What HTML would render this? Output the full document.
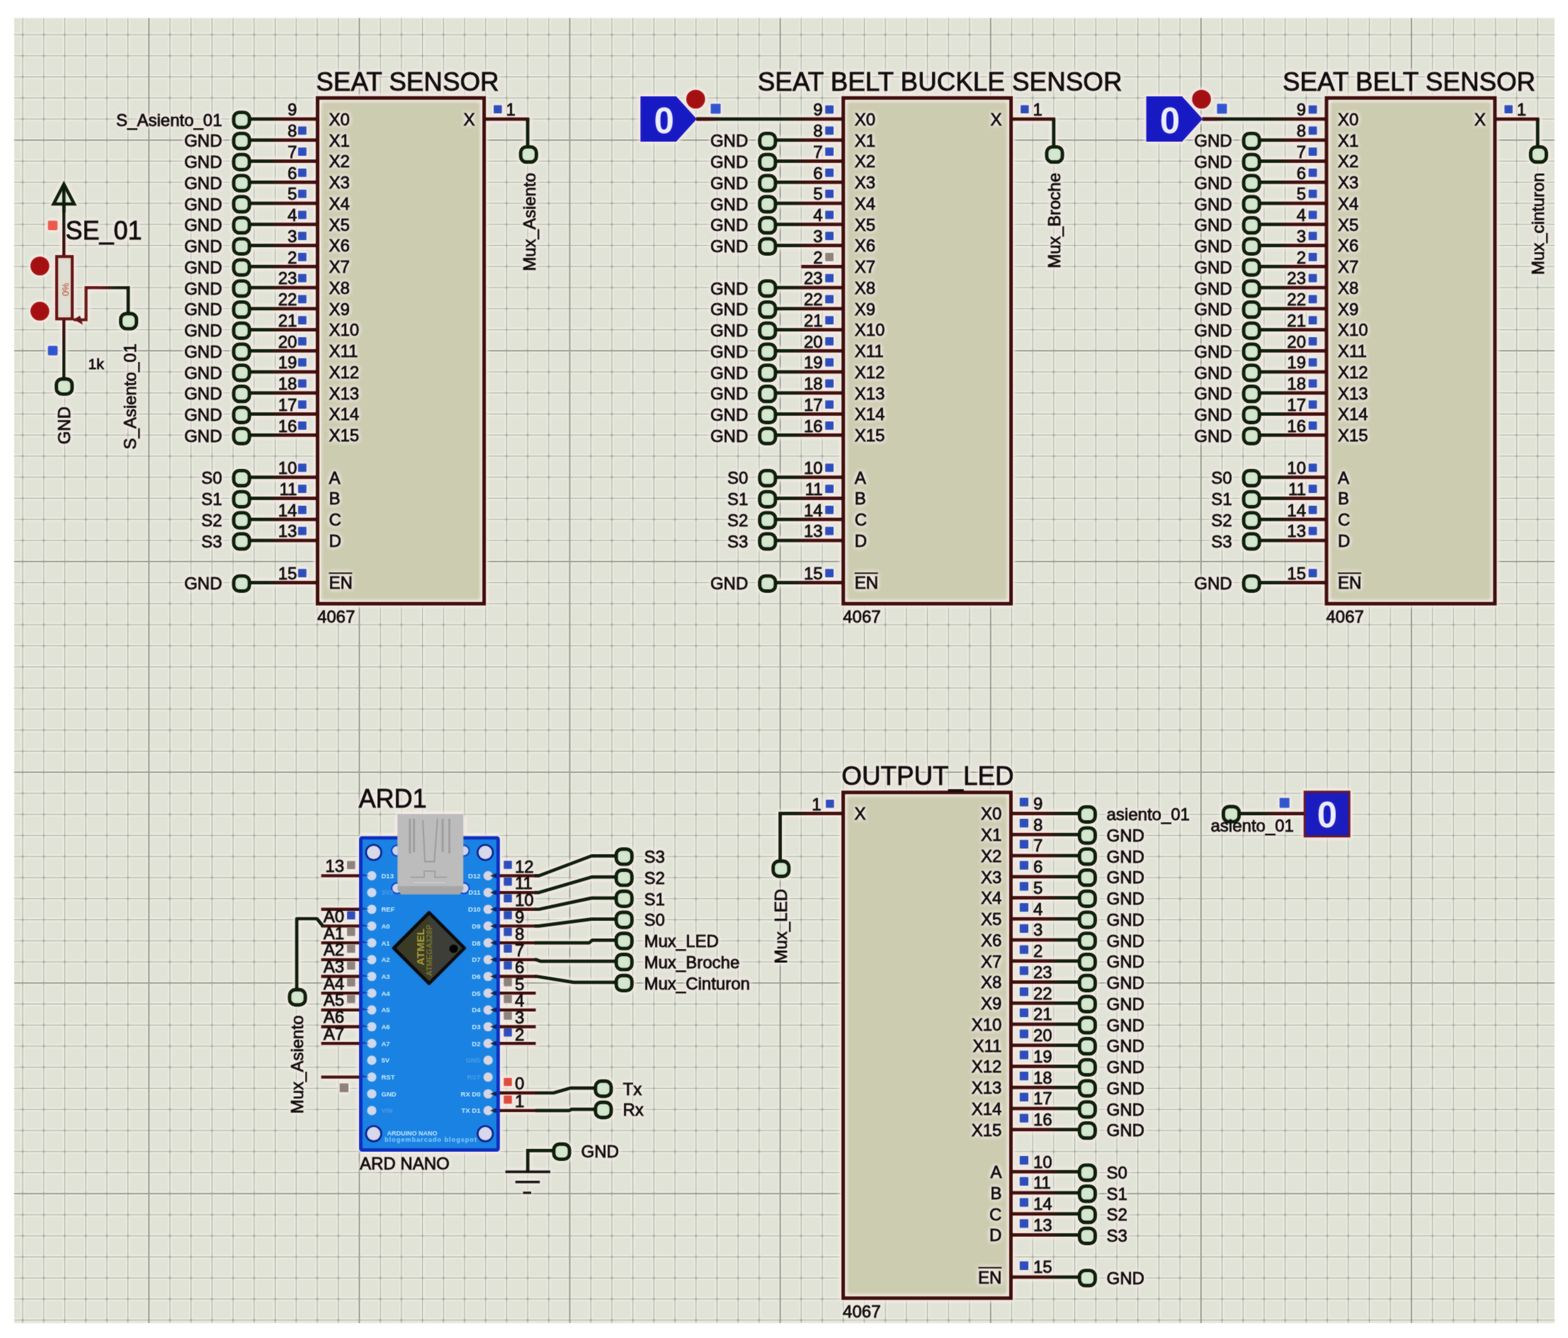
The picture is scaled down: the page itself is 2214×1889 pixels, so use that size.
<!DOCTYPE html>
<html lang="es">
<head>
<meta charset="utf-8">
<title>Schematic</title>
<style>
html,body{margin:0;padding:0;background:#fff;}
body{width:2214px;height:1889px;overflow:hidden;}
svg{display:block;font-family:"Liberation Sans",sans-serif;}
svg text{fill:#0a0a0a;stroke:#0a0a0a;stroke-width:0.85px;}
</style>
</head>
<body>
<svg width="2214" height="1889" viewBox="0 0 2214 1889">
<filter id="soft" filterUnits="userSpaceOnUse" x="0" y="0" width="2214" height="1889" color-interpolation-filters="sRGB">
<feGaussianBlur in="SourceGraphic" stdDeviation="1" result="sb"/>
<feComposite in="sb" in2="SourceGraphic" operator="arithmetic" k1="0" k2="0.42" k3="0.58" k4="0"/>
</filter>
<g filter="url(#soft)">
<rect x="0" y="0" width="2214" height="1889" fill="#ffffff"/>
<rect x="20.0" y="25.5" width="2175.0" height="1842.5" fill="#e1e3d7"/>
<path d="M32.04 25.5V1868.0M61.75 25.5V1868.0M91.46 25.5V1868.0M121.17 25.5V1868.0M150.88 25.5V1868.0M180.59 25.5V1868.0M210.3 25.5V1868.0M240.01 25.5V1868.0M269.72 25.5V1868.0M299.43 25.5V1868.0M329.14 25.5V1868.0M358.85 25.5V1868.0M388.56 25.5V1868.0M418.27 25.5V1868.0M447.98 25.5V1868.0M477.69 25.5V1868.0M507.4 25.5V1868.0M537.11 25.5V1868.0M566.82 25.5V1868.0M596.53 25.5V1868.0M626.24 25.5V1868.0M655.95 25.5V1868.0M685.66 25.5V1868.0M715.37 25.5V1868.0M745.08 25.5V1868.0M774.79 25.5V1868.0M804.5 25.5V1868.0M834.21 25.5V1868.0M863.92 25.5V1868.0M893.63 25.5V1868.0M923.34 25.5V1868.0M953.05 25.5V1868.0M982.76 25.5V1868.0M1012.47 25.5V1868.0M1042.18 25.5V1868.0M1071.89 25.5V1868.0M1101.6 25.5V1868.0M1131.31 25.5V1868.0M1161.02 25.5V1868.0M1190.73 25.5V1868.0M1220.44 25.5V1868.0M1250.15 25.5V1868.0M1279.86 25.5V1868.0M1309.57 25.5V1868.0M1339.28 25.5V1868.0M1368.99 25.5V1868.0M1398.7 25.5V1868.0M1428.41 25.5V1868.0M1458.12 25.5V1868.0M1487.83 25.5V1868.0M1517.54 25.5V1868.0M1547.25 25.5V1868.0M1576.96 25.5V1868.0M1606.67 25.5V1868.0M1636.38 25.5V1868.0M1666.09 25.5V1868.0M1695.8 25.5V1868.0M1725.51 25.5V1868.0M1755.22 25.5V1868.0M1784.93 25.5V1868.0M1814.64 25.5V1868.0M1844.35 25.5V1868.0M1874.06 25.5V1868.0M1903.77 25.5V1868.0M1933.48 25.5V1868.0M1963.19 25.5V1868.0M1992.9 25.5V1868.0M2022.61 25.5V1868.0M2052.32 25.5V1868.0M2082.03 25.5V1868.0M2111.74 25.5V1868.0M2141.45 25.5V1868.0M2171.16 25.5V1868.0M20.0 49.05H2195.0M20.0 78.8H2195.0M20.0 108.55H2195.0M20.0 138.3H2195.0M20.0 168.05H2195.0M20.0 197.8H2195.0M20.0 227.55H2195.0M20.0 257.3H2195.0M20.0 287.05H2195.0M20.0 316.8H2195.0M20.0 346.55H2195.0M20.0 376.3H2195.0M20.0 406.05H2195.0M20.0 435.8H2195.0M20.0 465.55H2195.0M20.0 495.3H2195.0M20.0 525.05H2195.0M20.0 554.8H2195.0M20.0 584.55H2195.0M20.0 614.3H2195.0M20.0 644.05H2195.0M20.0 673.8H2195.0M20.0 703.55H2195.0M20.0 733.3H2195.0M20.0 763.05H2195.0M20.0 792.8H2195.0M20.0 822.55H2195.0M20.0 852.3H2195.0M20.0 882.05H2195.0M20.0 911.8H2195.0M20.0 941.55H2195.0M20.0 971.3H2195.0M20.0 1001.05H2195.0M20.0 1030.8H2195.0M20.0 1060.55H2195.0M20.0 1090.3H2195.0M20.0 1120.05H2195.0M20.0 1149.8H2195.0M20.0 1179.55H2195.0M20.0 1209.3H2195.0M20.0 1239.05H2195.0M20.0 1268.8H2195.0M20.0 1298.55H2195.0M20.0 1328.3H2195.0M20.0 1358.05H2195.0M20.0 1387.8H2195.0M20.0 1417.55H2195.0M20.0 1447.3H2195.0M20.0 1477.05H2195.0M20.0 1506.8H2195.0M20.0 1536.55H2195.0M20.0 1566.3H2195.0M20.0 1596.05H2195.0M20.0 1625.8H2195.0M20.0 1655.55H2195.0M20.0 1685.3H2195.0M20.0 1715.05H2195.0M20.0 1744.8H2195.0M20.0 1774.55H2195.0M20.0 1804.3H2195.0M20.0 1834.05H2195.0M20.0 1863.8H2195.0" stroke="#ebece2" stroke-width="6.4" fill="none" stroke-opacity="0.7"/>
<path d="M32.04 25.5V1868.0M61.75 25.5V1868.0M91.46 25.5V1868.0M121.17 25.5V1868.0M150.88 25.5V1868.0M180.59 25.5V1868.0M240.01 25.5V1868.0M269.72 25.5V1868.0M299.43 25.5V1868.0M329.14 25.5V1868.0M358.85 25.5V1868.0M388.56 25.5V1868.0M418.27 25.5V1868.0M447.98 25.5V1868.0M477.69 25.5V1868.0M537.11 25.5V1868.0M566.82 25.5V1868.0M596.53 25.5V1868.0M626.24 25.5V1868.0M655.95 25.5V1868.0M685.66 25.5V1868.0M715.37 25.5V1868.0M745.08 25.5V1868.0M774.79 25.5V1868.0M834.21 25.5V1868.0M863.92 25.5V1868.0M893.63 25.5V1868.0M923.34 25.5V1868.0M953.05 25.5V1868.0M982.76 25.5V1868.0M1012.47 25.5V1868.0M1042.18 25.5V1868.0M1071.89 25.5V1868.0M1131.31 25.5V1868.0M1161.02 25.5V1868.0M1190.73 25.5V1868.0M1220.44 25.5V1868.0M1250.15 25.5V1868.0M1279.86 25.5V1868.0M1309.57 25.5V1868.0M1339.28 25.5V1868.0M1368.99 25.5V1868.0M1428.41 25.5V1868.0M1458.12 25.5V1868.0M1487.83 25.5V1868.0M1517.54 25.5V1868.0M1547.25 25.5V1868.0M1576.96 25.5V1868.0M1606.67 25.5V1868.0M1636.38 25.5V1868.0M1666.09 25.5V1868.0M1725.51 25.5V1868.0M1755.22 25.5V1868.0M1784.93 25.5V1868.0M1814.64 25.5V1868.0M1844.35 25.5V1868.0M1874.06 25.5V1868.0M1903.77 25.5V1868.0M1933.48 25.5V1868.0M1963.19 25.5V1868.0M2022.61 25.5V1868.0M2052.32 25.5V1868.0M2082.03 25.5V1868.0M2111.74 25.5V1868.0M2141.45 25.5V1868.0M2171.16 25.5V1868.0M20.0 49.05H2195.0M20.0 78.8H2195.0M20.0 108.55H2195.0M20.0 138.3H2195.0M20.0 168.05H2195.0M20.0 227.55H2195.0M20.0 257.3H2195.0M20.0 287.05H2195.0M20.0 316.8H2195.0M20.0 346.55H2195.0M20.0 376.3H2195.0M20.0 406.05H2195.0M20.0 435.8H2195.0M20.0 465.55H2195.0M20.0 525.05H2195.0M20.0 554.8H2195.0M20.0 584.55H2195.0M20.0 614.3H2195.0M20.0 644.05H2195.0M20.0 673.8H2195.0M20.0 703.55H2195.0M20.0 733.3H2195.0M20.0 763.05H2195.0M20.0 822.55H2195.0M20.0 852.3H2195.0M20.0 882.05H2195.0M20.0 911.8H2195.0M20.0 941.55H2195.0M20.0 971.3H2195.0M20.0 1001.05H2195.0M20.0 1030.8H2195.0M20.0 1060.55H2195.0M20.0 1120.05H2195.0M20.0 1149.8H2195.0M20.0 1179.55H2195.0M20.0 1209.3H2195.0M20.0 1239.05H2195.0M20.0 1268.8H2195.0M20.0 1298.55H2195.0M20.0 1328.3H2195.0M20.0 1358.05H2195.0M20.0 1417.55H2195.0M20.0 1447.3H2195.0M20.0 1477.05H2195.0M20.0 1506.8H2195.0M20.0 1536.55H2195.0M20.0 1566.3H2195.0M20.0 1596.05H2195.0M20.0 1625.8H2195.0M20.0 1655.55H2195.0M20.0 1715.05H2195.0M20.0 1744.8H2195.0M20.0 1774.55H2195.0M20.0 1804.3H2195.0M20.0 1834.05H2195.0M20.0 1863.8H2195.0" stroke="#a9ac9f" stroke-width="1.05" fill="none"/>
<path d="M210.3 25.5V1868.0M507.4 25.5V1868.0M804.5 25.5V1868.0M1101.6 25.5V1868.0M1398.7 25.5V1868.0M1695.8 25.5V1868.0M1992.9 25.5V1868.0M20.0 197.8H2195.0M20.0 495.3H2195.0M20.0 792.8H2195.0M20.0 1090.3H2195.0M20.0 1387.8H2195.0M20.0 1685.3H2195.0" stroke="#85887c" stroke-width="1.6" fill="none"/>
<path d="M20.0 49.05H2195.0M20.0 78.8H2195.0M20.0 108.55H2195.0M20.0 138.3H2195.0M20.0 168.05H2195.0M20.0 197.8H2195.0M20.0 227.55H2195.0M20.0 257.3H2195.0M20.0 287.05H2195.0M20.0 316.8H2195.0M20.0 346.55H2195.0M20.0 376.3H2195.0M20.0 406.05H2195.0M20.0 435.8H2195.0M20.0 465.55H2195.0M20.0 495.3H2195.0M20.0 525.05H2195.0M20.0 554.8H2195.0M20.0 584.55H2195.0M20.0 614.3H2195.0M20.0 644.05H2195.0M20.0 673.8H2195.0M20.0 703.55H2195.0M20.0 733.3H2195.0M20.0 763.05H2195.0M20.0 792.8H2195.0M20.0 822.55H2195.0M20.0 852.3H2195.0M20.0 882.05H2195.0M20.0 911.8H2195.0M20.0 941.55H2195.0M20.0 971.3H2195.0M20.0 1001.05H2195.0M20.0 1030.8H2195.0M20.0 1060.55H2195.0M20.0 1090.3H2195.0M20.0 1120.05H2195.0M20.0 1149.8H2195.0M20.0 1179.55H2195.0M20.0 1209.3H2195.0M20.0 1239.05H2195.0M20.0 1268.8H2195.0M20.0 1298.55H2195.0M20.0 1328.3H2195.0M20.0 1358.05H2195.0M20.0 1387.8H2195.0M20.0 1417.55H2195.0M20.0 1447.3H2195.0M20.0 1477.05H2195.0M20.0 1506.8H2195.0M20.0 1536.55H2195.0M20.0 1566.3H2195.0M20.0 1596.05H2195.0M20.0 1625.8H2195.0M20.0 1655.55H2195.0M20.0 1685.3H2195.0M20.0 1715.05H2195.0M20.0 1744.8H2195.0M20.0 1774.55H2195.0M20.0 1804.3H2195.0M20.0 1834.05H2195.0M20.0 1863.8H2195.0" stroke="#9c9f93" stroke-width="1.05" fill="none" stroke-dasharray="3.4 26.31" stroke-dashoffset="19.37"/>
<path d="M32.04 25.5V1868.0M61.75 25.5V1868.0M91.46 25.5V1868.0M121.17 25.5V1868.0M150.88 25.5V1868.0M180.59 25.5V1868.0M210.3 25.5V1868.0M240.01 25.5V1868.0M269.72 25.5V1868.0M299.43 25.5V1868.0M329.14 25.5V1868.0M358.85 25.5V1868.0M388.56 25.5V1868.0M418.27 25.5V1868.0M447.98 25.5V1868.0M477.69 25.5V1868.0M507.4 25.5V1868.0M537.11 25.5V1868.0M566.82 25.5V1868.0M596.53 25.5V1868.0M626.24 25.5V1868.0M655.95 25.5V1868.0M685.66 25.5V1868.0M715.37 25.5V1868.0M745.08 25.5V1868.0M774.79 25.5V1868.0M804.5 25.5V1868.0M834.21 25.5V1868.0M863.92 25.5V1868.0M893.63 25.5V1868.0M923.34 25.5V1868.0M953.05 25.5V1868.0M982.76 25.5V1868.0M1012.47 25.5V1868.0M1042.18 25.5V1868.0M1071.89 25.5V1868.0M1101.6 25.5V1868.0M1131.31 25.5V1868.0M1161.02 25.5V1868.0M1190.73 25.5V1868.0M1220.44 25.5V1868.0M1250.15 25.5V1868.0M1279.86 25.5V1868.0M1309.57 25.5V1868.0M1339.28 25.5V1868.0M1368.99 25.5V1868.0M1398.7 25.5V1868.0M1428.41 25.5V1868.0M1458.12 25.5V1868.0M1487.83 25.5V1868.0M1517.54 25.5V1868.0M1547.25 25.5V1868.0M1576.96 25.5V1868.0M1606.67 25.5V1868.0M1636.38 25.5V1868.0M1666.09 25.5V1868.0M1695.8 25.5V1868.0M1725.51 25.5V1868.0M1755.22 25.5V1868.0M1784.93 25.5V1868.0M1814.64 25.5V1868.0M1844.35 25.5V1868.0M1874.06 25.5V1868.0M1903.77 25.5V1868.0M1933.48 25.5V1868.0M1963.19 25.5V1868.0M1992.9 25.5V1868.0M2022.61 25.5V1868.0M2052.32 25.5V1868.0M2082.03 25.5V1868.0M2111.74 25.5V1868.0M2141.45 25.5V1868.0M2171.16 25.5V1868.0" stroke="#9c9f93" stroke-width="1.05" fill="none" stroke-dasharray="3.4 26.35" stroke-dashoffset="7.9"/>
<rect x="448.4" y="138.3" width="235.2" height="714" fill="#cbccb0"/>
<rect x="1190.7" y="138.3" width="236.9" height="714" fill="#cbccb0"/>
<rect x="1873" y="138.3" width="237.8" height="714" fill="#cbccb0"/>
<rect x="1190.6" y="1118.75" width="236.8" height="714" fill="#cbccb0"/>
<filter id="halo" filterUnits="userSpaceOnUse" x="0" y="0" width="2214" height="1889" color-interpolation-filters="sRGB">
<feGaussianBlur in="SourceAlpha" stdDeviation="3" result="b0"/>
<feComponentTransfer in="b0" result="b"><feFuncA type="linear" slope="3" intercept="0"/></feComponentTransfer>
<feFlood flood-color="#faeee9" flood-opacity="0.84"/>
<feComposite in2="b" operator="in" result="h"/>
<feMerge><feMergeNode in="h"/><feMergeNode in="SourceGraphic"/></feMerge>
</filter>
<g filter="url(#halo)">
<linearGradient id="g1" gradientUnits="userSpaceOnUse" x1="352.06" y1="0" x2="448.4" y2="0"><stop offset="0.26" stop-color="#0b1c09"/><stop offset="0.5" stop-color="#400c0a"/></linearGradient>
<rect x="352.06" y="165.65" width="96.34" height="4.8" fill="url(#g1)"/>
<rect x="329.96" y="158.65" width="22.2" height="21.4" fill="#d5e7cf" stroke="#0b1c09" stroke-width="4.9" rx="8"/>
<text x="313.56" y="177.65" font-size="24" text-anchor="end">S_Asiento_01</text>
<text x="419.4" y="163.25" font-size="24" text-anchor="end">9</text>
<linearGradient id="g2" gradientUnits="userSpaceOnUse" x1="352.06" y1="0" x2="448.4" y2="0"><stop offset="0.26" stop-color="#0b1c09"/><stop offset="0.5" stop-color="#400c0a"/></linearGradient>
<rect x="352.06" y="195.4" width="96.34" height="4.8" fill="url(#g2)"/>
<rect x="329.96" y="188.4" width="22.2" height="21.4" fill="#d5e7cf" stroke="#0b1c09" stroke-width="4.9" rx="8"/>
<text x="313.56" y="207.4" font-size="24" text-anchor="end">GND</text>
<text x="419.4" y="193" font-size="24" text-anchor="end">8</text>
<rect x="420.9" y="178.5" width="11.8" height="11.8" fill="#2c4dbc" rx="1"/>
<linearGradient id="g3" gradientUnits="userSpaceOnUse" x1="352.06" y1="0" x2="448.4" y2="0"><stop offset="0.26" stop-color="#0b1c09"/><stop offset="0.5" stop-color="#400c0a"/></linearGradient>
<rect x="352.06" y="225.15" width="96.34" height="4.8" fill="url(#g3)"/>
<rect x="329.96" y="218.15" width="22.2" height="21.4" fill="#d5e7cf" stroke="#0b1c09" stroke-width="4.9" rx="8"/>
<text x="313.56" y="237.15" font-size="24" text-anchor="end">GND</text>
<text x="419.4" y="222.75" font-size="24" text-anchor="end">7</text>
<rect x="420.9" y="208.25" width="11.8" height="11.8" fill="#2c4dbc" rx="1"/>
<linearGradient id="g4" gradientUnits="userSpaceOnUse" x1="352.06" y1="0" x2="448.4" y2="0"><stop offset="0.26" stop-color="#0b1c09"/><stop offset="0.5" stop-color="#400c0a"/></linearGradient>
<rect x="352.06" y="254.9" width="96.34" height="4.8" fill="url(#g4)"/>
<rect x="329.96" y="247.9" width="22.2" height="21.4" fill="#d5e7cf" stroke="#0b1c09" stroke-width="4.9" rx="8"/>
<text x="313.56" y="266.9" font-size="24" text-anchor="end">GND</text>
<text x="419.4" y="252.5" font-size="24" text-anchor="end">6</text>
<rect x="420.9" y="238" width="11.8" height="11.8" fill="#2c4dbc" rx="1"/>
<linearGradient id="g5" gradientUnits="userSpaceOnUse" x1="352.06" y1="0" x2="448.4" y2="0"><stop offset="0.26" stop-color="#0b1c09"/><stop offset="0.5" stop-color="#400c0a"/></linearGradient>
<rect x="352.06" y="284.65" width="96.34" height="4.8" fill="url(#g5)"/>
<rect x="329.96" y="277.65" width="22.2" height="21.4" fill="#d5e7cf" stroke="#0b1c09" stroke-width="4.9" rx="8"/>
<text x="313.56" y="296.65" font-size="24" text-anchor="end">GND</text>
<text x="419.4" y="282.25" font-size="24" text-anchor="end">5</text>
<rect x="420.9" y="267.75" width="11.8" height="11.8" fill="#2c4dbc" rx="1"/>
<linearGradient id="g6" gradientUnits="userSpaceOnUse" x1="352.06" y1="0" x2="448.4" y2="0"><stop offset="0.26" stop-color="#0b1c09"/><stop offset="0.5" stop-color="#400c0a"/></linearGradient>
<rect x="352.06" y="314.4" width="96.34" height="4.8" fill="url(#g6)"/>
<rect x="329.96" y="307.4" width="22.2" height="21.4" fill="#d5e7cf" stroke="#0b1c09" stroke-width="4.9" rx="8"/>
<text x="313.56" y="326.4" font-size="24" text-anchor="end">GND</text>
<text x="419.4" y="312" font-size="24" text-anchor="end">4</text>
<rect x="420.9" y="297.5" width="11.8" height="11.8" fill="#2c4dbc" rx="1"/>
<linearGradient id="g7" gradientUnits="userSpaceOnUse" x1="352.06" y1="0" x2="448.4" y2="0"><stop offset="0.26" stop-color="#0b1c09"/><stop offset="0.5" stop-color="#400c0a"/></linearGradient>
<rect x="352.06" y="344.15" width="96.34" height="4.8" fill="url(#g7)"/>
<rect x="329.96" y="337.15" width="22.2" height="21.4" fill="#d5e7cf" stroke="#0b1c09" stroke-width="4.9" rx="8"/>
<text x="313.56" y="356.15" font-size="24" text-anchor="end">GND</text>
<text x="419.4" y="341.75" font-size="24" text-anchor="end">3</text>
<rect x="420.9" y="327.25" width="11.8" height="11.8" fill="#2c4dbc" rx="1"/>
<linearGradient id="g8" gradientUnits="userSpaceOnUse" x1="352.06" y1="0" x2="448.4" y2="0"><stop offset="0.26" stop-color="#0b1c09"/><stop offset="0.5" stop-color="#400c0a"/></linearGradient>
<rect x="352.06" y="373.9" width="96.34" height="4.8" fill="url(#g8)"/>
<rect x="329.96" y="366.9" width="22.2" height="21.4" fill="#d5e7cf" stroke="#0b1c09" stroke-width="4.9" rx="8"/>
<text x="313.56" y="385.9" font-size="24" text-anchor="end">GND</text>
<text x="419.4" y="371.5" font-size="24" text-anchor="end">2</text>
<rect x="420.9" y="357" width="11.8" height="11.8" fill="#2c4dbc" rx="1"/>
<linearGradient id="g9" gradientUnits="userSpaceOnUse" x1="352.06" y1="0" x2="448.4" y2="0"><stop offset="0.26" stop-color="#0b1c09"/><stop offset="0.5" stop-color="#400c0a"/></linearGradient>
<rect x="352.06" y="403.65" width="96.34" height="4.8" fill="url(#g9)"/>
<rect x="329.96" y="396.65" width="22.2" height="21.4" fill="#d5e7cf" stroke="#0b1c09" stroke-width="4.9" rx="8"/>
<text x="313.56" y="415.65" font-size="24" text-anchor="end">GND</text>
<text x="419.4" y="401.25" font-size="24" text-anchor="end">23</text>
<rect x="420.9" y="386.75" width="11.8" height="11.8" fill="#2c4dbc" rx="1"/>
<linearGradient id="g10" gradientUnits="userSpaceOnUse" x1="352.06" y1="0" x2="448.4" y2="0"><stop offset="0.26" stop-color="#0b1c09"/><stop offset="0.5" stop-color="#400c0a"/></linearGradient>
<rect x="352.06" y="433.4" width="96.34" height="4.8" fill="url(#g10)"/>
<rect x="329.96" y="426.4" width="22.2" height="21.4" fill="#d5e7cf" stroke="#0b1c09" stroke-width="4.9" rx="8"/>
<text x="313.56" y="445.4" font-size="24" text-anchor="end">GND</text>
<text x="419.4" y="431" font-size="24" text-anchor="end">22</text>
<rect x="420.9" y="416.5" width="11.8" height="11.8" fill="#2c4dbc" rx="1"/>
<linearGradient id="g11" gradientUnits="userSpaceOnUse" x1="352.06" y1="0" x2="448.4" y2="0"><stop offset="0.26" stop-color="#0b1c09"/><stop offset="0.5" stop-color="#400c0a"/></linearGradient>
<rect x="352.06" y="463.15" width="96.34" height="4.8" fill="url(#g11)"/>
<rect x="329.96" y="456.15" width="22.2" height="21.4" fill="#d5e7cf" stroke="#0b1c09" stroke-width="4.9" rx="8"/>
<text x="313.56" y="475.15" font-size="24" text-anchor="end">GND</text>
<text x="419.4" y="460.75" font-size="24" text-anchor="end">21</text>
<rect x="420.9" y="446.25" width="11.8" height="11.8" fill="#2c4dbc" rx="1"/>
<linearGradient id="g12" gradientUnits="userSpaceOnUse" x1="352.06" y1="0" x2="448.4" y2="0"><stop offset="0.26" stop-color="#0b1c09"/><stop offset="0.5" stop-color="#400c0a"/></linearGradient>
<rect x="352.06" y="492.9" width="96.34" height="4.8" fill="url(#g12)"/>
<rect x="329.96" y="485.9" width="22.2" height="21.4" fill="#d5e7cf" stroke="#0b1c09" stroke-width="4.9" rx="8"/>
<text x="313.56" y="504.9" font-size="24" text-anchor="end">GND</text>
<text x="419.4" y="490.5" font-size="24" text-anchor="end">20</text>
<rect x="420.9" y="476" width="11.8" height="11.8" fill="#2c4dbc" rx="1"/>
<linearGradient id="g13" gradientUnits="userSpaceOnUse" x1="352.06" y1="0" x2="448.4" y2="0"><stop offset="0.26" stop-color="#0b1c09"/><stop offset="0.5" stop-color="#400c0a"/></linearGradient>
<rect x="352.06" y="522.65" width="96.34" height="4.8" fill="url(#g13)"/>
<rect x="329.96" y="515.65" width="22.2" height="21.4" fill="#d5e7cf" stroke="#0b1c09" stroke-width="4.9" rx="8"/>
<text x="313.56" y="534.65" font-size="24" text-anchor="end">GND</text>
<text x="419.4" y="520.25" font-size="24" text-anchor="end">19</text>
<rect x="420.9" y="505.75" width="11.8" height="11.8" fill="#2c4dbc" rx="1"/>
<linearGradient id="g14" gradientUnits="userSpaceOnUse" x1="352.06" y1="0" x2="448.4" y2="0"><stop offset="0.26" stop-color="#0b1c09"/><stop offset="0.5" stop-color="#400c0a"/></linearGradient>
<rect x="352.06" y="552.4" width="96.34" height="4.8" fill="url(#g14)"/>
<rect x="329.96" y="545.4" width="22.2" height="21.4" fill="#d5e7cf" stroke="#0b1c09" stroke-width="4.9" rx="8"/>
<text x="313.56" y="564.4" font-size="24" text-anchor="end">GND</text>
<text x="419.4" y="550" font-size="24" text-anchor="end">18</text>
<rect x="420.9" y="535.5" width="11.8" height="11.8" fill="#2c4dbc" rx="1"/>
<linearGradient id="g15" gradientUnits="userSpaceOnUse" x1="352.06" y1="0" x2="448.4" y2="0"><stop offset="0.26" stop-color="#0b1c09"/><stop offset="0.5" stop-color="#400c0a"/></linearGradient>
<rect x="352.06" y="582.15" width="96.34" height="4.8" fill="url(#g15)"/>
<rect x="329.96" y="575.15" width="22.2" height="21.4" fill="#d5e7cf" stroke="#0b1c09" stroke-width="4.9" rx="8"/>
<text x="313.56" y="594.15" font-size="24" text-anchor="end">GND</text>
<text x="419.4" y="579.75" font-size="24" text-anchor="end">17</text>
<rect x="420.9" y="565.25" width="11.8" height="11.8" fill="#2c4dbc" rx="1"/>
<linearGradient id="g16" gradientUnits="userSpaceOnUse" x1="352.06" y1="0" x2="448.4" y2="0"><stop offset="0.26" stop-color="#0b1c09"/><stop offset="0.5" stop-color="#400c0a"/></linearGradient>
<rect x="352.06" y="611.9" width="96.34" height="4.8" fill="url(#g16)"/>
<rect x="329.96" y="604.9" width="22.2" height="21.4" fill="#d5e7cf" stroke="#0b1c09" stroke-width="4.9" rx="8"/>
<text x="313.56" y="623.9" font-size="24" text-anchor="end">GND</text>
<text x="419.4" y="609.5" font-size="24" text-anchor="end">16</text>
<rect x="420.9" y="595" width="11.8" height="11.8" fill="#2c4dbc" rx="1"/>
<linearGradient id="g17" gradientUnits="userSpaceOnUse" x1="352.06" y1="0" x2="448.4" y2="0"><stop offset="0.26" stop-color="#0b1c09"/><stop offset="0.5" stop-color="#400c0a"/></linearGradient>
<rect x="352.06" y="671.4" width="96.34" height="4.8" fill="url(#g17)"/>
<rect x="329.96" y="664.4" width="22.2" height="21.4" fill="#d5e7cf" stroke="#0b1c09" stroke-width="4.9" rx="8"/>
<text x="313.56" y="683.4" font-size="24" text-anchor="end">S0</text>
<text x="419.4" y="669" font-size="24" text-anchor="end">10</text>
<rect x="420.9" y="654.5" width="11.8" height="11.8" fill="#2c4dbc" rx="1"/>
<linearGradient id="g18" gradientUnits="userSpaceOnUse" x1="352.06" y1="0" x2="448.4" y2="0"><stop offset="0.26" stop-color="#0b1c09"/><stop offset="0.5" stop-color="#400c0a"/></linearGradient>
<rect x="352.06" y="701.15" width="96.34" height="4.8" fill="url(#g18)"/>
<rect x="329.96" y="694.15" width="22.2" height="21.4" fill="#d5e7cf" stroke="#0b1c09" stroke-width="4.9" rx="8"/>
<text x="313.56" y="713.15" font-size="24" text-anchor="end">S1</text>
<text x="419.4" y="698.75" font-size="24" text-anchor="end">11</text>
<rect x="420.9" y="684.25" width="11.8" height="11.8" fill="#2c4dbc" rx="1"/>
<linearGradient id="g19" gradientUnits="userSpaceOnUse" x1="352.06" y1="0" x2="448.4" y2="0"><stop offset="0.26" stop-color="#0b1c09"/><stop offset="0.5" stop-color="#400c0a"/></linearGradient>
<rect x="352.06" y="730.9" width="96.34" height="4.8" fill="url(#g19)"/>
<rect x="329.96" y="723.9" width="22.2" height="21.4" fill="#d5e7cf" stroke="#0b1c09" stroke-width="4.9" rx="8"/>
<text x="313.56" y="742.9" font-size="24" text-anchor="end">S2</text>
<text x="419.4" y="728.5" font-size="24" text-anchor="end">14</text>
<rect x="420.9" y="714" width="11.8" height="11.8" fill="#2c4dbc" rx="1"/>
<linearGradient id="g20" gradientUnits="userSpaceOnUse" x1="352.06" y1="0" x2="448.4" y2="0"><stop offset="0.26" stop-color="#0b1c09"/><stop offset="0.5" stop-color="#400c0a"/></linearGradient>
<rect x="352.06" y="760.65" width="96.34" height="4.8" fill="url(#g20)"/>
<rect x="329.96" y="753.65" width="22.2" height="21.4" fill="#d5e7cf" stroke="#0b1c09" stroke-width="4.9" rx="8"/>
<text x="313.56" y="772.65" font-size="24" text-anchor="end">S3</text>
<text x="419.4" y="758.25" font-size="24" text-anchor="end">13</text>
<rect x="420.9" y="743.75" width="11.8" height="11.8" fill="#2c4dbc" rx="1"/>
<linearGradient id="g21" gradientUnits="userSpaceOnUse" x1="352.06" y1="0" x2="448.4" y2="0"><stop offset="0.26" stop-color="#0b1c09"/><stop offset="0.5" stop-color="#400c0a"/></linearGradient>
<rect x="352.06" y="820.15" width="96.34" height="4.8" fill="url(#g21)"/>
<rect x="329.96" y="813.15" width="22.2" height="21.4" fill="#d5e7cf" stroke="#0b1c09" stroke-width="4.9" rx="8"/>
<text x="313.56" y="832.15" font-size="24" text-anchor="end">GND</text>
<text x="419.4" y="817.75" font-size="24" text-anchor="end">15</text>
<rect x="420.9" y="803.25" width="11.8" height="11.8" fill="#2c4dbc" rx="1"/>
<line x1="683.6" y1="168.05" x2="747.38" y2="168.05" stroke="#400c0a" stroke-width="4.8" stroke-linecap="butt"/>
<line x1="745.08" y1="168.05" x2="745.08" y2="208.05" stroke="#0b1c09" stroke-width="4.8" stroke-linecap="butt"/>
<rect x="735.18" y="207.35" width="22.2" height="21.4" fill="#d5e7cf" stroke="#0b1c09" stroke-width="4.9" rx="8"/>
<rect x="697.1" y="148.55" width="11.5" height="11.5" fill="#2c4dbc" rx="1"/>
<text x="714.6" y="163.05" font-size="24">1</text>
<rect x="448.4" y="138.3" width="235.2" height="714" fill="none" stroke="#3c0c0a" stroke-width="5"/>
<text x="464.4" y="176.85" font-size="24">X0</text>
<text x="464.4" y="206.6" font-size="24">X1</text>
<text x="464.4" y="236.35" font-size="24">X2</text>
<text x="464.4" y="266.1" font-size="24">X3</text>
<text x="464.4" y="295.85" font-size="24">X4</text>
<text x="464.4" y="325.6" font-size="24">X5</text>
<text x="464.4" y="355.35" font-size="24">X6</text>
<text x="464.4" y="385.1" font-size="24">X7</text>
<text x="464.4" y="414.85" font-size="24">X8</text>
<text x="464.4" y="444.6" font-size="24">X9</text>
<text x="464.4" y="474.35" font-size="24">X10</text>
<text x="464.4" y="504.1" font-size="24">X11</text>
<text x="464.4" y="533.85" font-size="24">X12</text>
<text x="464.4" y="563.6" font-size="24">X13</text>
<text x="464.4" y="593.35" font-size="24">X14</text>
<text x="464.4" y="623.1" font-size="24">X15</text>
<text x="464.4" y="682.6" font-size="24">A</text>
<text x="464.4" y="712.35" font-size="24">B</text>
<text x="464.4" y="742.1" font-size="24">C</text>
<text x="464.4" y="771.85" font-size="24">D</text>
<text x="464.4" y="831.35" font-size="24">EN</text>
<line x1="464.4" y1="809.35" x2="497.4" y2="809.35" stroke="#0a0a0a" stroke-width="2" stroke-linecap="butt"/>
<text x="670.6" y="176.85" font-size="24" text-anchor="end">X</text>
<text x="447.9" y="879.3" font-size="24">4067</text>
<text x="446.3" y="128" font-size="36.8">SEAT SENSOR</text>
<linearGradient id="g22" gradientUnits="userSpaceOnUse" x1="983" y1="0" x2="1190.7" y2="0"><stop offset="0.59" stop-color="#0b1c09"/><stop offset="0.83" stop-color="#400c0a"/></linearGradient>
<rect x="983" y="165.65" width="207.7" height="4.8" fill="url(#g22)"/>
<text x="1161.7" y="163.25" font-size="24" text-anchor="end">9</text>
<rect x="1165.2" y="148.75" width="11.8" height="11.8" fill="#2c4dbc" rx="1"/>
<linearGradient id="g23" gradientUnits="userSpaceOnUse" x1="1094.81" y1="0" x2="1190.7" y2="0"><stop offset="0.26" stop-color="#0b1c09"/><stop offset="0.5" stop-color="#400c0a"/></linearGradient>
<rect x="1094.81" y="195.4" width="95.89" height="4.8" fill="url(#g23)"/>
<rect x="1072.71" y="188.4" width="22.2" height="21.4" fill="#d5e7cf" stroke="#0b1c09" stroke-width="4.9" rx="8"/>
<text x="1056.31" y="207.4" font-size="24" text-anchor="end">GND</text>
<text x="1161.7" y="193" font-size="24" text-anchor="end">8</text>
<rect x="1165.2" y="178.5" width="11.8" height="11.8" fill="#2c4dbc" rx="1"/>
<linearGradient id="g24" gradientUnits="userSpaceOnUse" x1="1094.81" y1="0" x2="1190.7" y2="0"><stop offset="0.26" stop-color="#0b1c09"/><stop offset="0.5" stop-color="#400c0a"/></linearGradient>
<rect x="1094.81" y="225.15" width="95.89" height="4.8" fill="url(#g24)"/>
<rect x="1072.71" y="218.15" width="22.2" height="21.4" fill="#d5e7cf" stroke="#0b1c09" stroke-width="4.9" rx="8"/>
<text x="1056.31" y="237.15" font-size="24" text-anchor="end">GND</text>
<text x="1161.7" y="222.75" font-size="24" text-anchor="end">7</text>
<rect x="1165.2" y="208.25" width="11.8" height="11.8" fill="#2c4dbc" rx="1"/>
<linearGradient id="g25" gradientUnits="userSpaceOnUse" x1="1094.81" y1="0" x2="1190.7" y2="0"><stop offset="0.26" stop-color="#0b1c09"/><stop offset="0.5" stop-color="#400c0a"/></linearGradient>
<rect x="1094.81" y="254.9" width="95.89" height="4.8" fill="url(#g25)"/>
<rect x="1072.71" y="247.9" width="22.2" height="21.4" fill="#d5e7cf" stroke="#0b1c09" stroke-width="4.9" rx="8"/>
<text x="1056.31" y="266.9" font-size="24" text-anchor="end">GND</text>
<text x="1161.7" y="252.5" font-size="24" text-anchor="end">6</text>
<rect x="1165.2" y="238" width="11.8" height="11.8" fill="#2c4dbc" rx="1"/>
<linearGradient id="g26" gradientUnits="userSpaceOnUse" x1="1094.81" y1="0" x2="1190.7" y2="0"><stop offset="0.26" stop-color="#0b1c09"/><stop offset="0.5" stop-color="#400c0a"/></linearGradient>
<rect x="1094.81" y="284.65" width="95.89" height="4.8" fill="url(#g26)"/>
<rect x="1072.71" y="277.65" width="22.2" height="21.4" fill="#d5e7cf" stroke="#0b1c09" stroke-width="4.9" rx="8"/>
<text x="1056.31" y="296.65" font-size="24" text-anchor="end">GND</text>
<text x="1161.7" y="282.25" font-size="24" text-anchor="end">5</text>
<rect x="1165.2" y="267.75" width="11.8" height="11.8" fill="#2c4dbc" rx="1"/>
<linearGradient id="g27" gradientUnits="userSpaceOnUse" x1="1094.81" y1="0" x2="1190.7" y2="0"><stop offset="0.26" stop-color="#0b1c09"/><stop offset="0.5" stop-color="#400c0a"/></linearGradient>
<rect x="1094.81" y="314.4" width="95.89" height="4.8" fill="url(#g27)"/>
<rect x="1072.71" y="307.4" width="22.2" height="21.4" fill="#d5e7cf" stroke="#0b1c09" stroke-width="4.9" rx="8"/>
<text x="1056.31" y="326.4" font-size="24" text-anchor="end">GND</text>
<text x="1161.7" y="312" font-size="24" text-anchor="end">4</text>
<rect x="1165.2" y="297.5" width="11.8" height="11.8" fill="#2c4dbc" rx="1"/>
<linearGradient id="g28" gradientUnits="userSpaceOnUse" x1="1094.81" y1="0" x2="1190.7" y2="0"><stop offset="0.26" stop-color="#0b1c09"/><stop offset="0.5" stop-color="#400c0a"/></linearGradient>
<rect x="1094.81" y="344.15" width="95.89" height="4.8" fill="url(#g28)"/>
<rect x="1072.71" y="337.15" width="22.2" height="21.4" fill="#d5e7cf" stroke="#0b1c09" stroke-width="4.9" rx="8"/>
<text x="1056.31" y="356.15" font-size="24" text-anchor="end">GND</text>
<text x="1161.7" y="341.75" font-size="24" text-anchor="end">3</text>
<rect x="1165.2" y="327.25" width="11.8" height="11.8" fill="#2c4dbc" rx="1"/>
<line x1="1131.31" y1="376.3" x2="1190.7" y2="376.3" stroke="#400c0a" stroke-width="4.8" stroke-linecap="butt"/>
<text x="1161.7" y="371.5" font-size="24" text-anchor="end">2</text>
<rect x="1165.2" y="357" width="11.8" height="11.8" fill="#8d837c" rx="1"/>
<linearGradient id="g29" gradientUnits="userSpaceOnUse" x1="1094.81" y1="0" x2="1190.7" y2="0"><stop offset="0.26" stop-color="#0b1c09"/><stop offset="0.5" stop-color="#400c0a"/></linearGradient>
<rect x="1094.81" y="403.65" width="95.89" height="4.8" fill="url(#g29)"/>
<rect x="1072.71" y="396.65" width="22.2" height="21.4" fill="#d5e7cf" stroke="#0b1c09" stroke-width="4.9" rx="8"/>
<text x="1056.31" y="415.65" font-size="24" text-anchor="end">GND</text>
<text x="1161.7" y="401.25" font-size="24" text-anchor="end">23</text>
<rect x="1165.2" y="386.75" width="11.8" height="11.8" fill="#2c4dbc" rx="1"/>
<linearGradient id="g30" gradientUnits="userSpaceOnUse" x1="1094.81" y1="0" x2="1190.7" y2="0"><stop offset="0.26" stop-color="#0b1c09"/><stop offset="0.5" stop-color="#400c0a"/></linearGradient>
<rect x="1094.81" y="433.4" width="95.89" height="4.8" fill="url(#g30)"/>
<rect x="1072.71" y="426.4" width="22.2" height="21.4" fill="#d5e7cf" stroke="#0b1c09" stroke-width="4.9" rx="8"/>
<text x="1056.31" y="445.4" font-size="24" text-anchor="end">GND</text>
<text x="1161.7" y="431" font-size="24" text-anchor="end">22</text>
<rect x="1165.2" y="416.5" width="11.8" height="11.8" fill="#2c4dbc" rx="1"/>
<linearGradient id="g31" gradientUnits="userSpaceOnUse" x1="1094.81" y1="0" x2="1190.7" y2="0"><stop offset="0.26" stop-color="#0b1c09"/><stop offset="0.5" stop-color="#400c0a"/></linearGradient>
<rect x="1094.81" y="463.15" width="95.89" height="4.8" fill="url(#g31)"/>
<rect x="1072.71" y="456.15" width="22.2" height="21.4" fill="#d5e7cf" stroke="#0b1c09" stroke-width="4.9" rx="8"/>
<text x="1056.31" y="475.15" font-size="24" text-anchor="end">GND</text>
<text x="1161.7" y="460.75" font-size="24" text-anchor="end">21</text>
<rect x="1165.2" y="446.25" width="11.8" height="11.8" fill="#2c4dbc" rx="1"/>
<linearGradient id="g32" gradientUnits="userSpaceOnUse" x1="1094.81" y1="0" x2="1190.7" y2="0"><stop offset="0.26" stop-color="#0b1c09"/><stop offset="0.5" stop-color="#400c0a"/></linearGradient>
<rect x="1094.81" y="492.9" width="95.89" height="4.8" fill="url(#g32)"/>
<rect x="1072.71" y="485.9" width="22.2" height="21.4" fill="#d5e7cf" stroke="#0b1c09" stroke-width="4.9" rx="8"/>
<text x="1056.31" y="504.9" font-size="24" text-anchor="end">GND</text>
<text x="1161.7" y="490.5" font-size="24" text-anchor="end">20</text>
<rect x="1165.2" y="476" width="11.8" height="11.8" fill="#2c4dbc" rx="1"/>
<linearGradient id="g33" gradientUnits="userSpaceOnUse" x1="1094.81" y1="0" x2="1190.7" y2="0"><stop offset="0.26" stop-color="#0b1c09"/><stop offset="0.5" stop-color="#400c0a"/></linearGradient>
<rect x="1094.81" y="522.65" width="95.89" height="4.8" fill="url(#g33)"/>
<rect x="1072.71" y="515.65" width="22.2" height="21.4" fill="#d5e7cf" stroke="#0b1c09" stroke-width="4.9" rx="8"/>
<text x="1056.31" y="534.65" font-size="24" text-anchor="end">GND</text>
<text x="1161.7" y="520.25" font-size="24" text-anchor="end">19</text>
<rect x="1165.2" y="505.75" width="11.8" height="11.8" fill="#2c4dbc" rx="1"/>
<linearGradient id="g34" gradientUnits="userSpaceOnUse" x1="1094.81" y1="0" x2="1190.7" y2="0"><stop offset="0.26" stop-color="#0b1c09"/><stop offset="0.5" stop-color="#400c0a"/></linearGradient>
<rect x="1094.81" y="552.4" width="95.89" height="4.8" fill="url(#g34)"/>
<rect x="1072.71" y="545.4" width="22.2" height="21.4" fill="#d5e7cf" stroke="#0b1c09" stroke-width="4.9" rx="8"/>
<text x="1056.31" y="564.4" font-size="24" text-anchor="end">GND</text>
<text x="1161.7" y="550" font-size="24" text-anchor="end">18</text>
<rect x="1165.2" y="535.5" width="11.8" height="11.8" fill="#2c4dbc" rx="1"/>
<linearGradient id="g35" gradientUnits="userSpaceOnUse" x1="1094.81" y1="0" x2="1190.7" y2="0"><stop offset="0.26" stop-color="#0b1c09"/><stop offset="0.5" stop-color="#400c0a"/></linearGradient>
<rect x="1094.81" y="582.15" width="95.89" height="4.8" fill="url(#g35)"/>
<rect x="1072.71" y="575.15" width="22.2" height="21.4" fill="#d5e7cf" stroke="#0b1c09" stroke-width="4.9" rx="8"/>
<text x="1056.31" y="594.15" font-size="24" text-anchor="end">GND</text>
<text x="1161.7" y="579.75" font-size="24" text-anchor="end">17</text>
<rect x="1165.2" y="565.25" width="11.8" height="11.8" fill="#2c4dbc" rx="1"/>
<linearGradient id="g36" gradientUnits="userSpaceOnUse" x1="1094.81" y1="0" x2="1190.7" y2="0"><stop offset="0.26" stop-color="#0b1c09"/><stop offset="0.5" stop-color="#400c0a"/></linearGradient>
<rect x="1094.81" y="611.9" width="95.89" height="4.8" fill="url(#g36)"/>
<rect x="1072.71" y="604.9" width="22.2" height="21.4" fill="#d5e7cf" stroke="#0b1c09" stroke-width="4.9" rx="8"/>
<text x="1056.31" y="623.9" font-size="24" text-anchor="end">GND</text>
<text x="1161.7" y="609.5" font-size="24" text-anchor="end">16</text>
<rect x="1165.2" y="595" width="11.8" height="11.8" fill="#2c4dbc" rx="1"/>
<linearGradient id="g37" gradientUnits="userSpaceOnUse" x1="1094.81" y1="0" x2="1190.7" y2="0"><stop offset="0.26" stop-color="#0b1c09"/><stop offset="0.5" stop-color="#400c0a"/></linearGradient>
<rect x="1094.81" y="671.4" width="95.89" height="4.8" fill="url(#g37)"/>
<rect x="1072.71" y="664.4" width="22.2" height="21.4" fill="#d5e7cf" stroke="#0b1c09" stroke-width="4.9" rx="8"/>
<text x="1056.31" y="683.4" font-size="24" text-anchor="end">S0</text>
<text x="1161.7" y="669" font-size="24" text-anchor="end">10</text>
<rect x="1165.2" y="654.5" width="11.8" height="11.8" fill="#2c4dbc" rx="1"/>
<linearGradient id="g38" gradientUnits="userSpaceOnUse" x1="1094.81" y1="0" x2="1190.7" y2="0"><stop offset="0.26" stop-color="#0b1c09"/><stop offset="0.5" stop-color="#400c0a"/></linearGradient>
<rect x="1094.81" y="701.15" width="95.89" height="4.8" fill="url(#g38)"/>
<rect x="1072.71" y="694.15" width="22.2" height="21.4" fill="#d5e7cf" stroke="#0b1c09" stroke-width="4.9" rx="8"/>
<text x="1056.31" y="713.15" font-size="24" text-anchor="end">S1</text>
<text x="1161.7" y="698.75" font-size="24" text-anchor="end">11</text>
<rect x="1165.2" y="684.25" width="11.8" height="11.8" fill="#2c4dbc" rx="1"/>
<linearGradient id="g39" gradientUnits="userSpaceOnUse" x1="1094.81" y1="0" x2="1190.7" y2="0"><stop offset="0.26" stop-color="#0b1c09"/><stop offset="0.5" stop-color="#400c0a"/></linearGradient>
<rect x="1094.81" y="730.9" width="95.89" height="4.8" fill="url(#g39)"/>
<rect x="1072.71" y="723.9" width="22.2" height="21.4" fill="#d5e7cf" stroke="#0b1c09" stroke-width="4.9" rx="8"/>
<text x="1056.31" y="742.9" font-size="24" text-anchor="end">S2</text>
<text x="1161.7" y="728.5" font-size="24" text-anchor="end">14</text>
<rect x="1165.2" y="714" width="11.8" height="11.8" fill="#2c4dbc" rx="1"/>
<linearGradient id="g40" gradientUnits="userSpaceOnUse" x1="1094.81" y1="0" x2="1190.7" y2="0"><stop offset="0.26" stop-color="#0b1c09"/><stop offset="0.5" stop-color="#400c0a"/></linearGradient>
<rect x="1094.81" y="760.65" width="95.89" height="4.8" fill="url(#g40)"/>
<rect x="1072.71" y="753.65" width="22.2" height="21.4" fill="#d5e7cf" stroke="#0b1c09" stroke-width="4.9" rx="8"/>
<text x="1056.31" y="772.65" font-size="24" text-anchor="end">S3</text>
<text x="1161.7" y="758.25" font-size="24" text-anchor="end">13</text>
<rect x="1165.2" y="743.75" width="11.8" height="11.8" fill="#2c4dbc" rx="1"/>
<linearGradient id="g41" gradientUnits="userSpaceOnUse" x1="1094.81" y1="0" x2="1190.7" y2="0"><stop offset="0.26" stop-color="#0b1c09"/><stop offset="0.5" stop-color="#400c0a"/></linearGradient>
<rect x="1094.81" y="820.15" width="95.89" height="4.8" fill="url(#g41)"/>
<rect x="1072.71" y="813.15" width="22.2" height="21.4" fill="#d5e7cf" stroke="#0b1c09" stroke-width="4.9" rx="8"/>
<text x="1056.31" y="832.15" font-size="24" text-anchor="end">GND</text>
<text x="1161.7" y="817.75" font-size="24" text-anchor="end">15</text>
<rect x="1165.2" y="803.25" width="11.8" height="11.8" fill="#2c4dbc" rx="1"/>
<line x1="1427.6" y1="168.05" x2="1490.13" y2="168.05" stroke="#400c0a" stroke-width="4.8" stroke-linecap="butt"/>
<line x1="1487.83" y1="168.05" x2="1487.83" y2="208.05" stroke="#0b1c09" stroke-width="4.8" stroke-linecap="butt"/>
<rect x="1477.93" y="207.35" width="22.2" height="21.4" fill="#d5e7cf" stroke="#0b1c09" stroke-width="4.9" rx="8"/>
<rect x="1441.1" y="148.55" width="11.5" height="11.5" fill="#2c4dbc" rx="1"/>
<text x="1458.6" y="163.05" font-size="24">1</text>
<rect x="1190.7" y="138.3" width="236.9" height="714" fill="none" stroke="#3c0c0a" stroke-width="5"/>
<text x="1206.7" y="176.85" font-size="24">X0</text>
<text x="1206.7" y="206.6" font-size="24">X1</text>
<text x="1206.7" y="236.35" font-size="24">X2</text>
<text x="1206.7" y="266.1" font-size="24">X3</text>
<text x="1206.7" y="295.85" font-size="24">X4</text>
<text x="1206.7" y="325.6" font-size="24">X5</text>
<text x="1206.7" y="355.35" font-size="24">X6</text>
<text x="1206.7" y="385.1" font-size="24">X7</text>
<text x="1206.7" y="414.85" font-size="24">X8</text>
<text x="1206.7" y="444.6" font-size="24">X9</text>
<text x="1206.7" y="474.35" font-size="24">X10</text>
<text x="1206.7" y="504.1" font-size="24">X11</text>
<text x="1206.7" y="533.85" font-size="24">X12</text>
<text x="1206.7" y="563.6" font-size="24">X13</text>
<text x="1206.7" y="593.35" font-size="24">X14</text>
<text x="1206.7" y="623.1" font-size="24">X15</text>
<text x="1206.7" y="682.6" font-size="24">A</text>
<text x="1206.7" y="712.35" font-size="24">B</text>
<text x="1206.7" y="742.1" font-size="24">C</text>
<text x="1206.7" y="771.85" font-size="24">D</text>
<text x="1206.7" y="831.35" font-size="24">EN</text>
<line x1="1206.7" y1="809.35" x2="1239.7" y2="809.35" stroke="#0a0a0a" stroke-width="2" stroke-linecap="butt"/>
<text x="1414.6" y="176.85" font-size="24" text-anchor="end">X</text>
<text x="1190.2" y="879.3" font-size="24">4067</text>
<text x="1069.8" y="128" font-size="36.8">SEAT BELT BUCKLE SENSOR</text>
<linearGradient id="g42" gradientUnits="userSpaceOnUse" x1="1698" y1="0" x2="1873" y2="0"><stop offset="0.55" stop-color="#0b1c09"/><stop offset="0.79" stop-color="#400c0a"/></linearGradient>
<rect x="1698" y="165.65" width="175" height="4.8" fill="url(#g42)"/>
<text x="1844" y="163.25" font-size="24" text-anchor="end">9</text>
<rect x="1847.7" y="148.75" width="11.8" height="11.8" fill="#2c4dbc" rx="1"/>
<linearGradient id="g43" gradientUnits="userSpaceOnUse" x1="1778.14" y1="0" x2="1873" y2="0"><stop offset="0.26" stop-color="#0b1c09"/><stop offset="0.5" stop-color="#400c0a"/></linearGradient>
<rect x="1778.14" y="195.4" width="94.86" height="4.8" fill="url(#g43)"/>
<rect x="1756.04" y="188.4" width="22.2" height="21.4" fill="#d5e7cf" stroke="#0b1c09" stroke-width="4.9" rx="8"/>
<text x="1739.64" y="207.4" font-size="24" text-anchor="end">GND</text>
<text x="1844" y="193" font-size="24" text-anchor="end">8</text>
<rect x="1847.7" y="178.5" width="11.8" height="11.8" fill="#2c4dbc" rx="1"/>
<linearGradient id="g44" gradientUnits="userSpaceOnUse" x1="1778.14" y1="0" x2="1873" y2="0"><stop offset="0.26" stop-color="#0b1c09"/><stop offset="0.5" stop-color="#400c0a"/></linearGradient>
<rect x="1778.14" y="225.15" width="94.86" height="4.8" fill="url(#g44)"/>
<rect x="1756.04" y="218.15" width="22.2" height="21.4" fill="#d5e7cf" stroke="#0b1c09" stroke-width="4.9" rx="8"/>
<text x="1739.64" y="237.15" font-size="24" text-anchor="end">GND</text>
<text x="1844" y="222.75" font-size="24" text-anchor="end">7</text>
<rect x="1847.7" y="208.25" width="11.8" height="11.8" fill="#2c4dbc" rx="1"/>
<linearGradient id="g45" gradientUnits="userSpaceOnUse" x1="1778.14" y1="0" x2="1873" y2="0"><stop offset="0.26" stop-color="#0b1c09"/><stop offset="0.5" stop-color="#400c0a"/></linearGradient>
<rect x="1778.14" y="254.9" width="94.86" height="4.8" fill="url(#g45)"/>
<rect x="1756.04" y="247.9" width="22.2" height="21.4" fill="#d5e7cf" stroke="#0b1c09" stroke-width="4.9" rx="8"/>
<text x="1739.64" y="266.9" font-size="24" text-anchor="end">GND</text>
<text x="1844" y="252.5" font-size="24" text-anchor="end">6</text>
<rect x="1847.7" y="238" width="11.8" height="11.8" fill="#2c4dbc" rx="1"/>
<linearGradient id="g46" gradientUnits="userSpaceOnUse" x1="1778.14" y1="0" x2="1873" y2="0"><stop offset="0.26" stop-color="#0b1c09"/><stop offset="0.5" stop-color="#400c0a"/></linearGradient>
<rect x="1778.14" y="284.65" width="94.86" height="4.8" fill="url(#g46)"/>
<rect x="1756.04" y="277.65" width="22.2" height="21.4" fill="#d5e7cf" stroke="#0b1c09" stroke-width="4.9" rx="8"/>
<text x="1739.64" y="296.65" font-size="24" text-anchor="end">GND</text>
<text x="1844" y="282.25" font-size="24" text-anchor="end">5</text>
<rect x="1847.7" y="267.75" width="11.8" height="11.8" fill="#2c4dbc" rx="1"/>
<linearGradient id="g47" gradientUnits="userSpaceOnUse" x1="1778.14" y1="0" x2="1873" y2="0"><stop offset="0.26" stop-color="#0b1c09"/><stop offset="0.5" stop-color="#400c0a"/></linearGradient>
<rect x="1778.14" y="314.4" width="94.86" height="4.8" fill="url(#g47)"/>
<rect x="1756.04" y="307.4" width="22.2" height="21.4" fill="#d5e7cf" stroke="#0b1c09" stroke-width="4.9" rx="8"/>
<text x="1739.64" y="326.4" font-size="24" text-anchor="end">GND</text>
<text x="1844" y="312" font-size="24" text-anchor="end">4</text>
<rect x="1847.7" y="297.5" width="11.8" height="11.8" fill="#2c4dbc" rx="1"/>
<linearGradient id="g48" gradientUnits="userSpaceOnUse" x1="1778.14" y1="0" x2="1873" y2="0"><stop offset="0.26" stop-color="#0b1c09"/><stop offset="0.5" stop-color="#400c0a"/></linearGradient>
<rect x="1778.14" y="344.15" width="94.86" height="4.8" fill="url(#g48)"/>
<rect x="1756.04" y="337.15" width="22.2" height="21.4" fill="#d5e7cf" stroke="#0b1c09" stroke-width="4.9" rx="8"/>
<text x="1739.64" y="356.15" font-size="24" text-anchor="end">GND</text>
<text x="1844" y="341.75" font-size="24" text-anchor="end">3</text>
<rect x="1847.7" y="327.25" width="11.8" height="11.8" fill="#2c4dbc" rx="1"/>
<linearGradient id="g49" gradientUnits="userSpaceOnUse" x1="1778.14" y1="0" x2="1873" y2="0"><stop offset="0.26" stop-color="#0b1c09"/><stop offset="0.5" stop-color="#400c0a"/></linearGradient>
<rect x="1778.14" y="373.9" width="94.86" height="4.8" fill="url(#g49)"/>
<rect x="1756.04" y="366.9" width="22.2" height="21.4" fill="#d5e7cf" stroke="#0b1c09" stroke-width="4.9" rx="8"/>
<text x="1739.64" y="385.9" font-size="24" text-anchor="end">GND</text>
<text x="1844" y="371.5" font-size="24" text-anchor="end">2</text>
<rect x="1847.7" y="357" width="11.8" height="11.8" fill="#2c4dbc" rx="1"/>
<linearGradient id="g50" gradientUnits="userSpaceOnUse" x1="1778.14" y1="0" x2="1873" y2="0"><stop offset="0.26" stop-color="#0b1c09"/><stop offset="0.5" stop-color="#400c0a"/></linearGradient>
<rect x="1778.14" y="403.65" width="94.86" height="4.8" fill="url(#g50)"/>
<rect x="1756.04" y="396.65" width="22.2" height="21.4" fill="#d5e7cf" stroke="#0b1c09" stroke-width="4.9" rx="8"/>
<text x="1739.64" y="415.65" font-size="24" text-anchor="end">GND</text>
<text x="1844" y="401.25" font-size="24" text-anchor="end">23</text>
<rect x="1847.7" y="386.75" width="11.8" height="11.8" fill="#2c4dbc" rx="1"/>
<linearGradient id="g51" gradientUnits="userSpaceOnUse" x1="1778.14" y1="0" x2="1873" y2="0"><stop offset="0.26" stop-color="#0b1c09"/><stop offset="0.5" stop-color="#400c0a"/></linearGradient>
<rect x="1778.14" y="433.4" width="94.86" height="4.8" fill="url(#g51)"/>
<rect x="1756.04" y="426.4" width="22.2" height="21.4" fill="#d5e7cf" stroke="#0b1c09" stroke-width="4.9" rx="8"/>
<text x="1739.64" y="445.4" font-size="24" text-anchor="end">GND</text>
<text x="1844" y="431" font-size="24" text-anchor="end">22</text>
<rect x="1847.7" y="416.5" width="11.8" height="11.8" fill="#2c4dbc" rx="1"/>
<linearGradient id="g52" gradientUnits="userSpaceOnUse" x1="1778.14" y1="0" x2="1873" y2="0"><stop offset="0.26" stop-color="#0b1c09"/><stop offset="0.5" stop-color="#400c0a"/></linearGradient>
<rect x="1778.14" y="463.15" width="94.86" height="4.8" fill="url(#g52)"/>
<rect x="1756.04" y="456.15" width="22.2" height="21.4" fill="#d5e7cf" stroke="#0b1c09" stroke-width="4.9" rx="8"/>
<text x="1739.64" y="475.15" font-size="24" text-anchor="end">GND</text>
<text x="1844" y="460.75" font-size="24" text-anchor="end">21</text>
<rect x="1847.7" y="446.25" width="11.8" height="11.8" fill="#2c4dbc" rx="1"/>
<linearGradient id="g53" gradientUnits="userSpaceOnUse" x1="1778.14" y1="0" x2="1873" y2="0"><stop offset="0.26" stop-color="#0b1c09"/><stop offset="0.5" stop-color="#400c0a"/></linearGradient>
<rect x="1778.14" y="492.9" width="94.86" height="4.8" fill="url(#g53)"/>
<rect x="1756.04" y="485.9" width="22.2" height="21.4" fill="#d5e7cf" stroke="#0b1c09" stroke-width="4.9" rx="8"/>
<text x="1739.64" y="504.9" font-size="24" text-anchor="end">GND</text>
<text x="1844" y="490.5" font-size="24" text-anchor="end">20</text>
<rect x="1847.7" y="476" width="11.8" height="11.8" fill="#2c4dbc" rx="1"/>
<linearGradient id="g54" gradientUnits="userSpaceOnUse" x1="1778.14" y1="0" x2="1873" y2="0"><stop offset="0.26" stop-color="#0b1c09"/><stop offset="0.5" stop-color="#400c0a"/></linearGradient>
<rect x="1778.14" y="522.65" width="94.86" height="4.8" fill="url(#g54)"/>
<rect x="1756.04" y="515.65" width="22.2" height="21.4" fill="#d5e7cf" stroke="#0b1c09" stroke-width="4.9" rx="8"/>
<text x="1739.64" y="534.65" font-size="24" text-anchor="end">GND</text>
<text x="1844" y="520.25" font-size="24" text-anchor="end">19</text>
<rect x="1847.7" y="505.75" width="11.8" height="11.8" fill="#2c4dbc" rx="1"/>
<linearGradient id="g55" gradientUnits="userSpaceOnUse" x1="1778.14" y1="0" x2="1873" y2="0"><stop offset="0.26" stop-color="#0b1c09"/><stop offset="0.5" stop-color="#400c0a"/></linearGradient>
<rect x="1778.14" y="552.4" width="94.86" height="4.8" fill="url(#g55)"/>
<rect x="1756.04" y="545.4" width="22.2" height="21.4" fill="#d5e7cf" stroke="#0b1c09" stroke-width="4.9" rx="8"/>
<text x="1739.64" y="564.4" font-size="24" text-anchor="end">GND</text>
<text x="1844" y="550" font-size="24" text-anchor="end">18</text>
<rect x="1847.7" y="535.5" width="11.8" height="11.8" fill="#2c4dbc" rx="1"/>
<linearGradient id="g56" gradientUnits="userSpaceOnUse" x1="1778.14" y1="0" x2="1873" y2="0"><stop offset="0.26" stop-color="#0b1c09"/><stop offset="0.5" stop-color="#400c0a"/></linearGradient>
<rect x="1778.14" y="582.15" width="94.86" height="4.8" fill="url(#g56)"/>
<rect x="1756.04" y="575.15" width="22.2" height="21.4" fill="#d5e7cf" stroke="#0b1c09" stroke-width="4.9" rx="8"/>
<text x="1739.64" y="594.15" font-size="24" text-anchor="end">GND</text>
<text x="1844" y="579.75" font-size="24" text-anchor="end">17</text>
<rect x="1847.7" y="565.25" width="11.8" height="11.8" fill="#2c4dbc" rx="1"/>
<linearGradient id="g57" gradientUnits="userSpaceOnUse" x1="1778.14" y1="0" x2="1873" y2="0"><stop offset="0.26" stop-color="#0b1c09"/><stop offset="0.5" stop-color="#400c0a"/></linearGradient>
<rect x="1778.14" y="611.9" width="94.86" height="4.8" fill="url(#g57)"/>
<rect x="1756.04" y="604.9" width="22.2" height="21.4" fill="#d5e7cf" stroke="#0b1c09" stroke-width="4.9" rx="8"/>
<text x="1739.64" y="623.9" font-size="24" text-anchor="end">GND</text>
<text x="1844" y="609.5" font-size="24" text-anchor="end">16</text>
<rect x="1847.7" y="595" width="11.8" height="11.8" fill="#2c4dbc" rx="1"/>
<linearGradient id="g58" gradientUnits="userSpaceOnUse" x1="1778.14" y1="0" x2="1873" y2="0"><stop offset="0.26" stop-color="#0b1c09"/><stop offset="0.5" stop-color="#400c0a"/></linearGradient>
<rect x="1778.14" y="671.4" width="94.86" height="4.8" fill="url(#g58)"/>
<rect x="1756.04" y="664.4" width="22.2" height="21.4" fill="#d5e7cf" stroke="#0b1c09" stroke-width="4.9" rx="8"/>
<text x="1739.64" y="683.4" font-size="24" text-anchor="end">S0</text>
<text x="1844" y="669" font-size="24" text-anchor="end">10</text>
<rect x="1847.7" y="654.5" width="11.8" height="11.8" fill="#2c4dbc" rx="1"/>
<linearGradient id="g59" gradientUnits="userSpaceOnUse" x1="1778.14" y1="0" x2="1873" y2="0"><stop offset="0.26" stop-color="#0b1c09"/><stop offset="0.5" stop-color="#400c0a"/></linearGradient>
<rect x="1778.14" y="701.15" width="94.86" height="4.8" fill="url(#g59)"/>
<rect x="1756.04" y="694.15" width="22.2" height="21.4" fill="#d5e7cf" stroke="#0b1c09" stroke-width="4.9" rx="8"/>
<text x="1739.64" y="713.15" font-size="24" text-anchor="end">S1</text>
<text x="1844" y="698.75" font-size="24" text-anchor="end">11</text>
<rect x="1847.7" y="684.25" width="11.8" height="11.8" fill="#2c4dbc" rx="1"/>
<linearGradient id="g60" gradientUnits="userSpaceOnUse" x1="1778.14" y1="0" x2="1873" y2="0"><stop offset="0.26" stop-color="#0b1c09"/><stop offset="0.5" stop-color="#400c0a"/></linearGradient>
<rect x="1778.14" y="730.9" width="94.86" height="4.8" fill="url(#g60)"/>
<rect x="1756.04" y="723.9" width="22.2" height="21.4" fill="#d5e7cf" stroke="#0b1c09" stroke-width="4.9" rx="8"/>
<text x="1739.64" y="742.9" font-size="24" text-anchor="end">S2</text>
<text x="1844" y="728.5" font-size="24" text-anchor="end">14</text>
<rect x="1847.7" y="714" width="11.8" height="11.8" fill="#2c4dbc" rx="1"/>
<linearGradient id="g61" gradientUnits="userSpaceOnUse" x1="1778.14" y1="0" x2="1873" y2="0"><stop offset="0.26" stop-color="#0b1c09"/><stop offset="0.5" stop-color="#400c0a"/></linearGradient>
<rect x="1778.14" y="760.65" width="94.86" height="4.8" fill="url(#g61)"/>
<rect x="1756.04" y="753.65" width="22.2" height="21.4" fill="#d5e7cf" stroke="#0b1c09" stroke-width="4.9" rx="8"/>
<text x="1739.64" y="772.65" font-size="24" text-anchor="end">S3</text>
<text x="1844" y="758.25" font-size="24" text-anchor="end">13</text>
<rect x="1847.7" y="743.75" width="11.8" height="11.8" fill="#2c4dbc" rx="1"/>
<linearGradient id="g62" gradientUnits="userSpaceOnUse" x1="1778.14" y1="0" x2="1873" y2="0"><stop offset="0.26" stop-color="#0b1c09"/><stop offset="0.5" stop-color="#400c0a"/></linearGradient>
<rect x="1778.14" y="820.15" width="94.86" height="4.8" fill="url(#g62)"/>
<rect x="1756.04" y="813.15" width="22.2" height="21.4" fill="#d5e7cf" stroke="#0b1c09" stroke-width="4.9" rx="8"/>
<text x="1739.64" y="832.15" font-size="24" text-anchor="end">GND</text>
<text x="1844" y="817.75" font-size="24" text-anchor="end">15</text>
<rect x="1847.7" y="803.25" width="11.8" height="11.8" fill="#2c4dbc" rx="1"/>
<line x1="2110.8" y1="168.05" x2="2173.46" y2="168.05" stroke="#400c0a" stroke-width="4.8" stroke-linecap="butt"/>
<line x1="2171.16" y1="168.05" x2="2171.16" y2="208.05" stroke="#0b1c09" stroke-width="4.8" stroke-linecap="butt"/>
<rect x="2161.26" y="207.35" width="22.2" height="21.4" fill="#d5e7cf" stroke="#0b1c09" stroke-width="4.9" rx="8"/>
<rect x="2124.3" y="148.55" width="11.5" height="11.5" fill="#2c4dbc" rx="1"/>
<text x="2141.8" y="163.05" font-size="24">1</text>
<rect x="1873" y="138.3" width="237.8" height="714" fill="none" stroke="#3c0c0a" stroke-width="5"/>
<text x="1889" y="176.85" font-size="24">X0</text>
<text x="1889" y="206.6" font-size="24">X1</text>
<text x="1889" y="236.35" font-size="24">X2</text>
<text x="1889" y="266.1" font-size="24">X3</text>
<text x="1889" y="295.85" font-size="24">X4</text>
<text x="1889" y="325.6" font-size="24">X5</text>
<text x="1889" y="355.35" font-size="24">X6</text>
<text x="1889" y="385.1" font-size="24">X7</text>
<text x="1889" y="414.85" font-size="24">X8</text>
<text x="1889" y="444.6" font-size="24">X9</text>
<text x="1889" y="474.35" font-size="24">X10</text>
<text x="1889" y="504.1" font-size="24">X11</text>
<text x="1889" y="533.85" font-size="24">X12</text>
<text x="1889" y="563.6" font-size="24">X13</text>
<text x="1889" y="593.35" font-size="24">X14</text>
<text x="1889" y="623.1" font-size="24">X15</text>
<text x="1889" y="682.6" font-size="24">A</text>
<text x="1889" y="712.35" font-size="24">B</text>
<text x="1889" y="742.1" font-size="24">C</text>
<text x="1889" y="771.85" font-size="24">D</text>
<text x="1889" y="831.35" font-size="24">EN</text>
<line x1="1889" y1="809.35" x2="1922" y2="809.35" stroke="#0a0a0a" stroke-width="2" stroke-linecap="butt"/>
<text x="2097.8" y="176.85" font-size="24" text-anchor="end">X</text>
<text x="1872.5" y="879.3" font-size="24">4067</text>
<text x="1811" y="128" font-size="36.8">SEAT BELT SENSOR</text>
<linearGradient id="g63" gradientUnits="userSpaceOnUse" x1="1427.4" y1="0" x2="1524.33" y2="0"><stop offset="0.5" stop-color="#400c0a"/><stop offset="0.74" stop-color="#0b1c09"/></linearGradient>
<rect x="1427.4" y="1146.1" width="96.93" height="4.8" fill="url(#g63)"/>
<rect x="1524.23" y="1139.1" width="22.2" height="21.4" fill="#d5e7cf" stroke="#0b1c09" stroke-width="4.9" rx="8"/>
<text x="1562.53" y="1158.1" font-size="24">asiento_01</text>
<text x="1458.9" y="1142.9" font-size="24">9</text>
<rect x="1439.8" y="1126.2" width="12.2" height="12.2" fill="#2c4dbc" rx="1"/>
<linearGradient id="g64" gradientUnits="userSpaceOnUse" x1="1427.4" y1="0" x2="1524.33" y2="0"><stop offset="0.5" stop-color="#400c0a"/><stop offset="0.74" stop-color="#0b1c09"/></linearGradient>
<rect x="1427.4" y="1175.85" width="96.93" height="4.8" fill="url(#g64)"/>
<rect x="1524.23" y="1168.85" width="22.2" height="21.4" fill="#d5e7cf" stroke="#0b1c09" stroke-width="4.9" rx="8"/>
<text x="1562.53" y="1187.85" font-size="24">GND</text>
<text x="1458.9" y="1172.65" font-size="24">8</text>
<rect x="1439.8" y="1155.95" width="12.2" height="12.2" fill="#2c4dbc" rx="1"/>
<linearGradient id="g65" gradientUnits="userSpaceOnUse" x1="1427.4" y1="0" x2="1524.33" y2="0"><stop offset="0.5" stop-color="#400c0a"/><stop offset="0.74" stop-color="#0b1c09"/></linearGradient>
<rect x="1427.4" y="1205.6" width="96.93" height="4.8" fill="url(#g65)"/>
<rect x="1524.23" y="1198.6" width="22.2" height="21.4" fill="#d5e7cf" stroke="#0b1c09" stroke-width="4.9" rx="8"/>
<text x="1562.53" y="1217.6" font-size="24">GND</text>
<text x="1458.9" y="1202.4" font-size="24">7</text>
<rect x="1439.8" y="1185.7" width="12.2" height="12.2" fill="#2c4dbc" rx="1"/>
<linearGradient id="g66" gradientUnits="userSpaceOnUse" x1="1427.4" y1="0" x2="1524.33" y2="0"><stop offset="0.5" stop-color="#400c0a"/><stop offset="0.74" stop-color="#0b1c09"/></linearGradient>
<rect x="1427.4" y="1235.35" width="96.93" height="4.8" fill="url(#g66)"/>
<rect x="1524.23" y="1228.35" width="22.2" height="21.4" fill="#d5e7cf" stroke="#0b1c09" stroke-width="4.9" rx="8"/>
<text x="1562.53" y="1247.35" font-size="24">GND</text>
<text x="1458.9" y="1232.15" font-size="24">6</text>
<rect x="1439.8" y="1215.45" width="12.2" height="12.2" fill="#2c4dbc" rx="1"/>
<linearGradient id="g67" gradientUnits="userSpaceOnUse" x1="1427.4" y1="0" x2="1524.33" y2="0"><stop offset="0.5" stop-color="#400c0a"/><stop offset="0.74" stop-color="#0b1c09"/></linearGradient>
<rect x="1427.4" y="1265.1" width="96.93" height="4.8" fill="url(#g67)"/>
<rect x="1524.23" y="1258.1" width="22.2" height="21.4" fill="#d5e7cf" stroke="#0b1c09" stroke-width="4.9" rx="8"/>
<text x="1562.53" y="1277.1" font-size="24">GND</text>
<text x="1458.9" y="1261.9" font-size="24">5</text>
<rect x="1439.8" y="1245.2" width="12.2" height="12.2" fill="#2c4dbc" rx="1"/>
<linearGradient id="g68" gradientUnits="userSpaceOnUse" x1="1427.4" y1="0" x2="1524.33" y2="0"><stop offset="0.5" stop-color="#400c0a"/><stop offset="0.74" stop-color="#0b1c09"/></linearGradient>
<rect x="1427.4" y="1294.85" width="96.93" height="4.8" fill="url(#g68)"/>
<rect x="1524.23" y="1287.85" width="22.2" height="21.4" fill="#d5e7cf" stroke="#0b1c09" stroke-width="4.9" rx="8"/>
<text x="1562.53" y="1306.85" font-size="24">GND</text>
<text x="1458.9" y="1291.65" font-size="24">4</text>
<rect x="1439.8" y="1274.95" width="12.2" height="12.2" fill="#2c4dbc" rx="1"/>
<linearGradient id="g69" gradientUnits="userSpaceOnUse" x1="1427.4" y1="0" x2="1524.33" y2="0"><stop offset="0.5" stop-color="#400c0a"/><stop offset="0.74" stop-color="#0b1c09"/></linearGradient>
<rect x="1427.4" y="1324.6" width="96.93" height="4.8" fill="url(#g69)"/>
<rect x="1524.23" y="1317.6" width="22.2" height="21.4" fill="#d5e7cf" stroke="#0b1c09" stroke-width="4.9" rx="8"/>
<text x="1562.53" y="1336.6" font-size="24">GND</text>
<text x="1458.9" y="1321.4" font-size="24">3</text>
<rect x="1439.8" y="1304.7" width="12.2" height="12.2" fill="#2c4dbc" rx="1"/>
<linearGradient id="g70" gradientUnits="userSpaceOnUse" x1="1427.4" y1="0" x2="1524.33" y2="0"><stop offset="0.5" stop-color="#400c0a"/><stop offset="0.74" stop-color="#0b1c09"/></linearGradient>
<rect x="1427.4" y="1354.35" width="96.93" height="4.8" fill="url(#g70)"/>
<rect x="1524.23" y="1347.35" width="22.2" height="21.4" fill="#d5e7cf" stroke="#0b1c09" stroke-width="4.9" rx="8"/>
<text x="1562.53" y="1366.35" font-size="24">GND</text>
<text x="1458.9" y="1351.15" font-size="24">2</text>
<rect x="1439.8" y="1334.45" width="12.2" height="12.2" fill="#2c4dbc" rx="1"/>
<linearGradient id="g71" gradientUnits="userSpaceOnUse" x1="1427.4" y1="0" x2="1524.33" y2="0"><stop offset="0.5" stop-color="#400c0a"/><stop offset="0.74" stop-color="#0b1c09"/></linearGradient>
<rect x="1427.4" y="1384.1" width="96.93" height="4.8" fill="url(#g71)"/>
<rect x="1524.23" y="1377.1" width="22.2" height="21.4" fill="#d5e7cf" stroke="#0b1c09" stroke-width="4.9" rx="8"/>
<text x="1562.53" y="1396.1" font-size="24">GND</text>
<text x="1458.9" y="1380.9" font-size="24">23</text>
<rect x="1439.8" y="1364.2" width="12.2" height="12.2" fill="#2c4dbc" rx="1"/>
<linearGradient id="g72" gradientUnits="userSpaceOnUse" x1="1427.4" y1="0" x2="1524.33" y2="0"><stop offset="0.5" stop-color="#400c0a"/><stop offset="0.74" stop-color="#0b1c09"/></linearGradient>
<rect x="1427.4" y="1413.85" width="96.93" height="4.8" fill="url(#g72)"/>
<rect x="1524.23" y="1406.85" width="22.2" height="21.4" fill="#d5e7cf" stroke="#0b1c09" stroke-width="4.9" rx="8"/>
<text x="1562.53" y="1425.85" font-size="24">GND</text>
<text x="1458.9" y="1410.65" font-size="24">22</text>
<rect x="1439.8" y="1393.95" width="12.2" height="12.2" fill="#2c4dbc" rx="1"/>
<linearGradient id="g73" gradientUnits="userSpaceOnUse" x1="1427.4" y1="0" x2="1524.33" y2="0"><stop offset="0.5" stop-color="#400c0a"/><stop offset="0.74" stop-color="#0b1c09"/></linearGradient>
<rect x="1427.4" y="1443.6" width="96.93" height="4.8" fill="url(#g73)"/>
<rect x="1524.23" y="1436.6" width="22.2" height="21.4" fill="#d5e7cf" stroke="#0b1c09" stroke-width="4.9" rx="8"/>
<text x="1562.53" y="1455.6" font-size="24">GND</text>
<text x="1458.9" y="1440.4" font-size="24">21</text>
<rect x="1439.8" y="1423.7" width="12.2" height="12.2" fill="#2c4dbc" rx="1"/>
<linearGradient id="g74" gradientUnits="userSpaceOnUse" x1="1427.4" y1="0" x2="1524.33" y2="0"><stop offset="0.5" stop-color="#400c0a"/><stop offset="0.74" stop-color="#0b1c09"/></linearGradient>
<rect x="1427.4" y="1473.35" width="96.93" height="4.8" fill="url(#g74)"/>
<rect x="1524.23" y="1466.35" width="22.2" height="21.4" fill="#d5e7cf" stroke="#0b1c09" stroke-width="4.9" rx="8"/>
<text x="1562.53" y="1485.35" font-size="24">GND</text>
<text x="1458.9" y="1470.15" font-size="24">20</text>
<rect x="1439.8" y="1453.45" width="12.2" height="12.2" fill="#2c4dbc" rx="1"/>
<linearGradient id="g75" gradientUnits="userSpaceOnUse" x1="1427.4" y1="0" x2="1524.33" y2="0"><stop offset="0.5" stop-color="#400c0a"/><stop offset="0.74" stop-color="#0b1c09"/></linearGradient>
<rect x="1427.4" y="1503.1" width="96.93" height="4.8" fill="url(#g75)"/>
<rect x="1524.23" y="1496.1" width="22.2" height="21.4" fill="#d5e7cf" stroke="#0b1c09" stroke-width="4.9" rx="8"/>
<text x="1562.53" y="1515.1" font-size="24">GND</text>
<text x="1458.9" y="1499.9" font-size="24">19</text>
<rect x="1439.8" y="1483.2" width="12.2" height="12.2" fill="#2c4dbc" rx="1"/>
<linearGradient id="g76" gradientUnits="userSpaceOnUse" x1="1427.4" y1="0" x2="1524.33" y2="0"><stop offset="0.5" stop-color="#400c0a"/><stop offset="0.74" stop-color="#0b1c09"/></linearGradient>
<rect x="1427.4" y="1532.85" width="96.93" height="4.8" fill="url(#g76)"/>
<rect x="1524.23" y="1525.85" width="22.2" height="21.4" fill="#d5e7cf" stroke="#0b1c09" stroke-width="4.9" rx="8"/>
<text x="1562.53" y="1544.85" font-size="24">GND</text>
<text x="1458.9" y="1529.65" font-size="24">18</text>
<rect x="1439.8" y="1512.95" width="12.2" height="12.2" fill="#2c4dbc" rx="1"/>
<linearGradient id="g77" gradientUnits="userSpaceOnUse" x1="1427.4" y1="0" x2="1524.33" y2="0"><stop offset="0.5" stop-color="#400c0a"/><stop offset="0.74" stop-color="#0b1c09"/></linearGradient>
<rect x="1427.4" y="1562.6" width="96.93" height="4.8" fill="url(#g77)"/>
<rect x="1524.23" y="1555.6" width="22.2" height="21.4" fill="#d5e7cf" stroke="#0b1c09" stroke-width="4.9" rx="8"/>
<text x="1562.53" y="1574.6" font-size="24">GND</text>
<text x="1458.9" y="1559.4" font-size="24">17</text>
<rect x="1439.8" y="1542.7" width="12.2" height="12.2" fill="#2c4dbc" rx="1"/>
<linearGradient id="g78" gradientUnits="userSpaceOnUse" x1="1427.4" y1="0" x2="1524.33" y2="0"><stop offset="0.5" stop-color="#400c0a"/><stop offset="0.74" stop-color="#0b1c09"/></linearGradient>
<rect x="1427.4" y="1592.35" width="96.93" height="4.8" fill="url(#g78)"/>
<rect x="1524.23" y="1585.35" width="22.2" height="21.4" fill="#d5e7cf" stroke="#0b1c09" stroke-width="4.9" rx="8"/>
<text x="1562.53" y="1604.35" font-size="24">GND</text>
<text x="1458.9" y="1589.15" font-size="24">16</text>
<rect x="1439.8" y="1572.45" width="12.2" height="12.2" fill="#2c4dbc" rx="1"/>
<linearGradient id="g79" gradientUnits="userSpaceOnUse" x1="1427.4" y1="0" x2="1524.33" y2="0"><stop offset="0.5" stop-color="#400c0a"/><stop offset="0.74" stop-color="#0b1c09"/></linearGradient>
<rect x="1427.4" y="1651.85" width="96.93" height="4.8" fill="url(#g79)"/>
<rect x="1524.23" y="1644.85" width="22.2" height="21.4" fill="#d5e7cf" stroke="#0b1c09" stroke-width="4.9" rx="8"/>
<text x="1562.53" y="1663.85" font-size="24">S0</text>
<text x="1458.9" y="1648.65" font-size="24">10</text>
<rect x="1439.8" y="1631.95" width="12.2" height="12.2" fill="#2c4dbc" rx="1"/>
<linearGradient id="g80" gradientUnits="userSpaceOnUse" x1="1427.4" y1="0" x2="1524.33" y2="0"><stop offset="0.5" stop-color="#400c0a"/><stop offset="0.74" stop-color="#0b1c09"/></linearGradient>
<rect x="1427.4" y="1681.6" width="96.93" height="4.8" fill="url(#g80)"/>
<rect x="1524.23" y="1674.6" width="22.2" height="21.4" fill="#d5e7cf" stroke="#0b1c09" stroke-width="4.9" rx="8"/>
<text x="1562.53" y="1693.6" font-size="24">S1</text>
<text x="1458.9" y="1678.4" font-size="24">11</text>
<rect x="1439.8" y="1661.7" width="12.2" height="12.2" fill="#2c4dbc" rx="1"/>
<linearGradient id="g81" gradientUnits="userSpaceOnUse" x1="1427.4" y1="0" x2="1524.33" y2="0"><stop offset="0.5" stop-color="#400c0a"/><stop offset="0.74" stop-color="#0b1c09"/></linearGradient>
<rect x="1427.4" y="1711.35" width="96.93" height="4.8" fill="url(#g81)"/>
<rect x="1524.23" y="1704.35" width="22.2" height="21.4" fill="#d5e7cf" stroke="#0b1c09" stroke-width="4.9" rx="8"/>
<text x="1562.53" y="1723.35" font-size="24">S2</text>
<text x="1458.9" y="1708.15" font-size="24">14</text>
<rect x="1439.8" y="1691.45" width="12.2" height="12.2" fill="#2c4dbc" rx="1"/>
<linearGradient id="g82" gradientUnits="userSpaceOnUse" x1="1427.4" y1="0" x2="1524.33" y2="0"><stop offset="0.5" stop-color="#400c0a"/><stop offset="0.74" stop-color="#0b1c09"/></linearGradient>
<rect x="1427.4" y="1741.1" width="96.93" height="4.8" fill="url(#g82)"/>
<rect x="1524.23" y="1734.1" width="22.2" height="21.4" fill="#d5e7cf" stroke="#0b1c09" stroke-width="4.9" rx="8"/>
<text x="1562.53" y="1753.1" font-size="24">S3</text>
<text x="1458.9" y="1737.9" font-size="24">13</text>
<rect x="1439.8" y="1721.2" width="12.2" height="12.2" fill="#2c4dbc" rx="1"/>
<linearGradient id="g83" gradientUnits="userSpaceOnUse" x1="1427.4" y1="0" x2="1524.33" y2="0"><stop offset="0.5" stop-color="#400c0a"/><stop offset="0.74" stop-color="#0b1c09"/></linearGradient>
<rect x="1427.4" y="1800.6" width="96.93" height="4.8" fill="url(#g83)"/>
<rect x="1524.23" y="1793.6" width="22.2" height="21.4" fill="#d5e7cf" stroke="#0b1c09" stroke-width="4.9" rx="8"/>
<text x="1562.53" y="1812.6" font-size="24">GND</text>
<text x="1458.9" y="1797.4" font-size="24">15</text>
<rect x="1439.8" y="1780.7" width="12.2" height="12.2" fill="#2c4dbc" rx="1"/>
<linearGradient id="g84" gradientUnits="userSpaceOnUse" x1="1099.3" y1="0" x2="1190.6" y2="0"><stop offset="0.23" stop-color="#0b1c09"/><stop offset="0.47" stop-color="#400c0a"/></linearGradient>
<rect x="1099.3" y="1146.1" width="91.3" height="4.8" fill="url(#g84)"/>
<line x1="1101.6" y1="1148.5" x2="1101.6" y2="1216.5" stroke="#0b1c09" stroke-width="4.8" stroke-linecap="butt"/>
<rect x="1091.7" y="1215.8" width="22.2" height="21.4" fill="#d5e7cf" stroke="#0b1c09" stroke-width="4.9" rx="8"/>
<rect x="1166.1" y="1129" width="11.5" height="11.5" fill="#2c4dbc" rx="1"/>
<text x="1159.6" y="1143.5" font-size="24" text-anchor="end">1</text>
<rect x="1190.6" y="1118.75" width="236.8" height="714" fill="none" stroke="#3c0c0a" stroke-width="5"/>
<text x="1414.4" y="1157.3" font-size="24" text-anchor="end">X0</text>
<text x="1414.4" y="1187.05" font-size="24" text-anchor="end">X1</text>
<text x="1414.4" y="1216.8" font-size="24" text-anchor="end">X2</text>
<text x="1414.4" y="1246.55" font-size="24" text-anchor="end">X3</text>
<text x="1414.4" y="1276.3" font-size="24" text-anchor="end">X4</text>
<text x="1414.4" y="1306.05" font-size="24" text-anchor="end">X5</text>
<text x="1414.4" y="1335.8" font-size="24" text-anchor="end">X6</text>
<text x="1414.4" y="1365.55" font-size="24" text-anchor="end">X7</text>
<text x="1414.4" y="1395.3" font-size="24" text-anchor="end">X8</text>
<text x="1414.4" y="1425.05" font-size="24" text-anchor="end">X9</text>
<text x="1414.4" y="1454.8" font-size="24" text-anchor="end">X10</text>
<text x="1414.4" y="1484.55" font-size="24" text-anchor="end">X11</text>
<text x="1414.4" y="1514.3" font-size="24" text-anchor="end">X12</text>
<text x="1414.4" y="1544.05" font-size="24" text-anchor="end">X13</text>
<text x="1414.4" y="1573.8" font-size="24" text-anchor="end">X14</text>
<text x="1414.4" y="1603.55" font-size="24" text-anchor="end">X15</text>
<text x="1414.4" y="1663.05" font-size="24" text-anchor="end">A</text>
<text x="1414.4" y="1692.8" font-size="24" text-anchor="end">B</text>
<text x="1414.4" y="1722.55" font-size="24" text-anchor="end">C</text>
<text x="1414.4" y="1752.3" font-size="24" text-anchor="end">D</text>
<text x="1414.4" y="1811.8" font-size="24" text-anchor="end">EN</text>
<line x1="1381.4" y1="1789.8" x2="1414.4" y2="1789.8" stroke="#0a0a0a" stroke-width="2" stroke-linecap="butt"/>
<text x="1206.6" y="1157.3" font-size="24">X</text>
<text x="1190.1" y="1859.75" font-size="24">4067</text>
<text x="1188.3" y="1108.45" font-size="36.8">OUTPUT<tspan dy="1.8">_</tspan><tspan dy="-1.8">LED</tspan></text>
<text x="755.5" y="244" font-size="24" text-anchor="end" transform="rotate(-90 755.5 244)">Mux_Asiento</text>
<text x="1496.5" y="244" font-size="24" text-anchor="end" transform="rotate(-90 1496.5 244)">Mux_Broche</text>
<text x="2179.5" y="244" font-size="24" text-anchor="end" transform="rotate(-90 2179.5 244)">Mux_cinturon</text>
<text x="1110.8" y="1255" font-size="24" text-anchor="end" transform="rotate(-90 1110.8 1255)">Mux_LED</text>
<path d="M904.3 136H954.8L983.8 168L954.8 200H904.3Z" fill="#1719c2"/>
<text x="937.8" y="187.6" font-size="51" text-anchor="middle" style="fill:#eeeefc;stroke:none" font-weight="bold">0</text>
<circle cx="982.3" cy="140" r="13.3" fill="#a40f12"/>
<rect x="1003.5" y="146.5" width="14" height="14" fill="#2f55d0" rx="1"/>
<linearGradient id="g85" gradientUnits="userSpaceOnUse" x1="997.8" y1="0" x2="1017.8" y2="0"><stop offset="0" stop-color="#400c0a"/><stop offset="1" stop-color="#400c0a" stop-opacity="0"/></linearGradient>
<rect x="983.3" y="165.6" width="34.5" height="4.8" fill="url(#g85)"/>
<path d="M1618.5 136H1669L1698 168L1669 200H1618.5Z" fill="#1719c2"/>
<text x="1652" y="187.6" font-size="51" text-anchor="middle" style="fill:#eeeefc;stroke:none" font-weight="bold">0</text>
<circle cx="1696.5" cy="140" r="13.3" fill="#a40f12"/>
<rect x="1718.4" y="146.5" width="14" height="14" fill="#2f55d0" rx="1"/>
<linearGradient id="g86" gradientUnits="userSpaceOnUse" x1="1712" y1="0" x2="1732" y2="0"><stop offset="0" stop-color="#400c0a"/><stop offset="1" stop-color="#400c0a" stop-opacity="0"/></linearGradient>
<rect x="1697.5" y="165.6" width="34.5" height="4.8" fill="url(#g86)"/>
<linearGradient id="pg1" gradientUnits="userSpaceOnUse" x1="0" y1="300" x2="0" y2="350"><stop offset="0" stop-color="#0b1c09"/><stop offset="1" stop-color="#400c0a"/></linearGradient>
<rect x="88.05" y="262" width="4.3" height="99" fill="url(#pg1)"/>
<path d="M90.2 260L75.7 288H104.7Z" fill="#e4ecdf" stroke="#0b1c09" stroke-width="4.6" stroke-linejoin="miter"/>
<line x1="90.2" y1="262" x2="90.2" y2="300" stroke="#0b1c09" stroke-width="4.7" stroke-linecap="butt"/>
<linearGradient id="pg2" gradientUnits="userSpaceOnUse" x1="0" y1="455" x2="0" y2="500"><stop offset="0" stop-color="#400c0a"/><stop offset="1" stop-color="#0b1c09"/></linearGradient>
<rect x="88.05" y="452" width="4.3" height="82" fill="url(#pg2)"/>
<rect x="80" y="362.2" width="22" height="88" fill="#deded2" stroke="#651412" stroke-width="4.2"/>
<text x="96.5" y="418" font-size="13" transform="rotate(-90 96.5 418)" style="fill:#c0452e;stroke:none">0%</text>
<linearGradient id="pg3" gradientUnits="userSpaceOnUse" x1="140" y1="0" x2="165" y2="0"><stop offset="0" stop-color="#651412"/><stop offset="1" stop-color="#0b1c09"/></linearGradient>
<polyline points="104,451.5 121.5,451.5 121.5,406.2 140,406.2" fill="none" stroke="#651412" stroke-width="4.2" stroke-linejoin="miter" stroke-linecap="butt"/>
<rect x="139.5" y="404.1" width="43.6" height="4.2" fill="url(#pg3)"/>
<line x1="181" y1="404.1" x2="181" y2="442" stroke="#0b1c09" stroke-width="4.7" stroke-linecap="butt"/>
<path d="M104 451L113 445.5L117 458.5Z" fill="#651412"/>
<rect x="170.5" y="442.7" width="22.2" height="21.4" fill="#d5e7cf" stroke="#0b1c09" stroke-width="4.9" rx="8"/>
<rect x="79.6" y="535" width="22.2" height="21.4" fill="#d5e7cf" stroke="#0b1c09" stroke-width="4.9" rx="8"/>
<circle cx="56.3" cy="375.5" r="13.3" fill="#a40f12"/>
<circle cx="56.3" cy="439.3" r="13.3" fill="#a40f12"/>
<rect x="67.6" y="311.5" width="13.6" height="13.4" fill="#e85a4c" rx="2"/>
<rect x="67.6" y="488.2" width="13.8" height="13.6" fill="#2f55d0" rx="2"/>
<text x="92.5" y="337.5" font-size="36">SE_01</text>
<text x="124.5" y="521" font-size="21">1k</text>
<text x="99.3" y="574" font-size="24" text-anchor="end" transform="rotate(-90 99.3 574)">GND</text>
<text x="191.9" y="485" font-size="24" text-anchor="end" transform="rotate(-90 191.9 485)">S_Asiento_01</text>
<rect x="1727.4" y="1138.7" width="22.2" height="21.4" fill="#d5e7cf" stroke="#0b1c09" stroke-width="4.9" rx="8"/>
<linearGradient id="g87" gradientUnits="userSpaceOnUse" x1="1749.5" y1="0" x2="1841" y2="0"><stop offset="0.32" stop-color="#0b1c09"/><stop offset="0.56" stop-color="#400c0a"/></linearGradient>
<rect x="1749.5" y="1146.2" width="91.5" height="4.8" fill="url(#g87)"/>
<rect x="1842.2" y="1117.8" width="63" height="63" fill="#1a1cc0" stroke="#6a1420" stroke-width="3"/>
<text x="1874" y="1168.3" font-size="51" text-anchor="middle" style="fill:#eeeefc;stroke:none" font-weight="bold">0</text>
<rect x="1806.7" y="1126.4" width="14" height="14" fill="#2f55d0" rx="1"/>
<text x="1709.5" y="1174" font-size="24">asiento_01</text>
<line x1="453.5" y1="1236.4" x2="509" y2="1236.4" stroke="#400c0a" stroke-width="4.3" stroke-linecap="butt"/>
<text x="486" y="1230.8" font-size="24" text-anchor="end">13</text>
<rect x="490" y="1215.4" width="11.5" height="11.5" fill="#8d837c" rx="1"/>
<line x1="453.5" y1="1283.76" x2="509" y2="1283.76" stroke="#400c0a" stroke-width="4.3" stroke-linecap="butt"/>
<line x1="453.5" y1="1307.44" x2="509" y2="1307.44" stroke="#400c0a" stroke-width="4.3" stroke-linecap="butt"/>
<text x="486" y="1301.84" font-size="24" text-anchor="end">A0</text>
<rect x="490" y="1286.44" width="11.5" height="11.5" fill="#2c4dbc" rx="1"/>
<line x1="453.5" y1="1331.12" x2="509" y2="1331.12" stroke="#400c0a" stroke-width="4.3" stroke-linecap="butt"/>
<text x="486" y="1325.52" font-size="24" text-anchor="end">A1</text>
<rect x="490" y="1310.12" width="11.5" height="11.5" fill="#8d837c" rx="1"/>
<line x1="453.5" y1="1354.8" x2="509" y2="1354.8" stroke="#400c0a" stroke-width="4.3" stroke-linecap="butt"/>
<text x="486" y="1349.2" font-size="24" text-anchor="end">A2</text>
<rect x="490" y="1333.8" width="11.5" height="11.5" fill="#8d837c" rx="1"/>
<line x1="453.5" y1="1378.48" x2="509" y2="1378.48" stroke="#400c0a" stroke-width="4.3" stroke-linecap="butt"/>
<text x="486" y="1372.88" font-size="24" text-anchor="end">A3</text>
<rect x="490" y="1357.48" width="11.5" height="11.5" fill="#8d837c" rx="1"/>
<line x1="453.5" y1="1402.16" x2="509" y2="1402.16" stroke="#400c0a" stroke-width="4.3" stroke-linecap="butt"/>
<text x="486" y="1396.56" font-size="24" text-anchor="end">A4</text>
<rect x="490" y="1381.16" width="11.5" height="11.5" fill="#8d837c" rx="1"/>
<line x1="453.5" y1="1425.84" x2="509" y2="1425.84" stroke="#400c0a" stroke-width="4.3" stroke-linecap="butt"/>
<text x="486" y="1420.24" font-size="24" text-anchor="end">A5</text>
<rect x="490" y="1404.84" width="11.5" height="11.5" fill="#8d837c" rx="1"/>
<line x1="453.5" y1="1449.52" x2="509" y2="1449.52" stroke="#400c0a" stroke-width="4.3" stroke-linecap="butt"/>
<text x="486" y="1443.92" font-size="24" text-anchor="end">A6</text>
<line x1="453.5" y1="1473.2" x2="509" y2="1473.2" stroke="#400c0a" stroke-width="4.3" stroke-linecap="butt"/>
<text x="486" y="1467.6" font-size="24" text-anchor="end">A7</text>
<line x1="453.5" y1="1520.56" x2="509" y2="1520.56" stroke="#400c0a" stroke-width="4.3" stroke-linecap="butt"/>
<rect x="479.5" y="1529.5" width="12.5" height="12.5" fill="#8d837c" rx="1"/>
<line x1="703.8" y1="1236.4" x2="756.5" y2="1236.4" stroke="#400c0a" stroke-width="4.3" stroke-linecap="butt"/>
<text x="727" y="1231.8" font-size="24">12</text>
<rect x="711.3" y="1215.2" width="11.5" height="11.5" fill="#2c4dbc" rx="1"/>
<line x1="703.8" y1="1260.08" x2="756.5" y2="1260.08" stroke="#400c0a" stroke-width="4.3" stroke-linecap="butt"/>
<text x="727" y="1255.48" font-size="24">11</text>
<rect x="711.3" y="1238.88" width="11.5" height="11.5" fill="#2c4dbc" rx="1"/>
<line x1="703.8" y1="1283.76" x2="756.5" y2="1283.76" stroke="#400c0a" stroke-width="4.3" stroke-linecap="butt"/>
<text x="727" y="1279.16" font-size="24">10</text>
<rect x="711.3" y="1262.56" width="11.5" height="11.5" fill="#2c4dbc" rx="1"/>
<line x1="703.8" y1="1307.44" x2="756.5" y2="1307.44" stroke="#400c0a" stroke-width="4.3" stroke-linecap="butt"/>
<text x="727" y="1302.84" font-size="24">9</text>
<rect x="711.3" y="1286.24" width="11.5" height="11.5" fill="#2c4dbc" rx="1"/>
<line x1="703.8" y1="1331.12" x2="756.5" y2="1331.12" stroke="#400c0a" stroke-width="4.3" stroke-linecap="butt"/>
<text x="727" y="1326.52" font-size="24">8</text>
<rect x="711.3" y="1309.92" width="11.5" height="11.5" fill="#2c4dbc" rx="1"/>
<line x1="703.8" y1="1354.8" x2="756.5" y2="1354.8" stroke="#400c0a" stroke-width="4.3" stroke-linecap="butt"/>
<text x="727" y="1350.2" font-size="24">7</text>
<rect x="711.3" y="1333.6" width="11.5" height="11.5" fill="#2c4dbc" rx="1"/>
<line x1="703.8" y1="1378.48" x2="756.5" y2="1378.48" stroke="#400c0a" stroke-width="4.3" stroke-linecap="butt"/>
<text x="727" y="1373.88" font-size="24">6</text>
<rect x="711.3" y="1357.28" width="11.5" height="11.5" fill="#2c4dbc" rx="1"/>
<line x1="703.8" y1="1402.16" x2="756.5" y2="1402.16" stroke="#400c0a" stroke-width="4.3" stroke-linecap="butt"/>
<text x="727" y="1397.56" font-size="24">5</text>
<rect x="711.3" y="1380.96" width="11.5" height="11.5" fill="#8d837c" rx="1"/>
<line x1="703.8" y1="1425.84" x2="756.5" y2="1425.84" stroke="#400c0a" stroke-width="4.3" stroke-linecap="butt"/>
<text x="727" y="1421.24" font-size="24">4</text>
<rect x="711.3" y="1404.64" width="11.5" height="11.5" fill="#8d837c" rx="1"/>
<line x1="703.8" y1="1449.52" x2="756.5" y2="1449.52" stroke="#400c0a" stroke-width="4.3" stroke-linecap="butt"/>
<text x="727" y="1444.92" font-size="24">3</text>
<rect x="711.3" y="1428.32" width="11.5" height="11.5" fill="#8d837c" rx="1"/>
<line x1="703.8" y1="1473.2" x2="756.5" y2="1473.2" stroke="#400c0a" stroke-width="4.3" stroke-linecap="butt"/>
<text x="727" y="1468.6" font-size="24">2</text>
<rect x="711.3" y="1452" width="11.5" height="11.5" fill="#2c4dbc" rx="1"/>
<line x1="703.8" y1="1543" x2="756.5" y2="1543" stroke="#400c0a" stroke-width="4.3" stroke-linecap="butt"/>
<text x="727" y="1538.4" font-size="24">0</text>
<rect x="711.3" y="1521.8" width="11.5" height="11.5" fill="#e04a3c" rx="1"/>
<line x1="703.8" y1="1567.9" x2="756.5" y2="1567.9" stroke="#400c0a" stroke-width="4.3" stroke-linecap="butt"/>
<text x="727" y="1563.3" font-size="24">1</text>
<rect x="711.3" y="1546.7" width="11.5" height="11.5" fill="#e04a3c" rx="1"/>
<polyline points="755,1236.4 761,1236.4 835.21,1208.4 870,1208.4" fill="none" stroke="#0b1c09" stroke-width="4.7" stroke-linejoin="round" stroke-linecap="butt"/>
<rect x="870.1" y="1198.7" width="22.2" height="21.4" fill="#d5e7cf" stroke="#0b1c09" stroke-width="4.9" rx="8"/>
<text x="909.5" y="1218" font-size="24">S3</text>
<polyline points="755,1260.08 761,1260.08 835.21,1238.15 870,1238.15" fill="none" stroke="#0b1c09" stroke-width="4.7" stroke-linejoin="round" stroke-linecap="butt"/>
<rect x="870.1" y="1228.45" width="22.2" height="21.4" fill="#d5e7cf" stroke="#0b1c09" stroke-width="4.9" rx="8"/>
<text x="909.5" y="1247.75" font-size="24">S2</text>
<polyline points="755,1283.76 761,1283.76 835.21,1267.9 870,1267.9" fill="none" stroke="#0b1c09" stroke-width="4.7" stroke-linejoin="round" stroke-linecap="butt"/>
<rect x="870.1" y="1258.2" width="22.2" height="21.4" fill="#d5e7cf" stroke="#0b1c09" stroke-width="4.9" rx="8"/>
<text x="909.5" y="1277.5" font-size="24">S1</text>
<polyline points="755,1307.44 761,1307.44 835.21,1297.65 870,1297.65" fill="none" stroke="#0b1c09" stroke-width="4.7" stroke-linejoin="round" stroke-linecap="butt"/>
<rect x="870.1" y="1287.95" width="22.2" height="21.4" fill="#d5e7cf" stroke="#0b1c09" stroke-width="4.9" rx="8"/>
<text x="909.5" y="1307.25" font-size="24">S0</text>
<polyline points="755,1331.12 832,1331.12 836,1327.4 870,1327.4" fill="none" stroke="#0b1c09" stroke-width="4.7" stroke-linejoin="round" stroke-linecap="butt"/>
<rect x="870.1" y="1317.7" width="22.2" height="21.4" fill="#d5e7cf" stroke="#0b1c09" stroke-width="4.9" rx="8"/>
<text x="909.5" y="1337" font-size="24">Mux_LED</text>
<polyline points="755,1354.8 757,1354.8 763,1357.15 870,1357.15" fill="none" stroke="#0b1c09" stroke-width="4.7" stroke-linejoin="round" stroke-linecap="butt"/>
<rect x="870.1" y="1347.45" width="22.2" height="21.4" fill="#d5e7cf" stroke="#0b1c09" stroke-width="4.9" rx="8"/>
<text x="909.5" y="1366.75" font-size="24">Mux_Broche</text>
<polyline points="755,1378.48 758,1378.48 810,1386.9 870,1386.9" fill="none" stroke="#0b1c09" stroke-width="4.7" stroke-linejoin="round" stroke-linecap="butt"/>
<rect x="870.1" y="1377.2" width="22.2" height="21.4" fill="#d5e7cf" stroke="#0b1c09" stroke-width="4.9" rx="8"/>
<text x="909.5" y="1396.5" font-size="24">Mux_Cinturon</text>
<polyline points="756,1543 781.5,1543 805,1536.2 842,1536.2" fill="none" stroke="#0b1c09" stroke-width="4.7" stroke-linejoin="round" stroke-linecap="butt"/>
<rect x="840.8" y="1526.3" width="22.2" height="21.4" fill="#d5e7cf" stroke="#0b1c09" stroke-width="4.9" rx="8"/>
<text x="879.5" y="1545.8" font-size="24">Tx</text>
<polyline points="756,1567.9 804,1567.9 806.5,1566.2 842,1566.2" fill="none" stroke="#0b1c09" stroke-width="4.7" stroke-linejoin="round" stroke-linecap="butt"/>
<rect x="840.8" y="1556.3" width="22.2" height="21.4" fill="#d5e7cf" stroke="#0b1c09" stroke-width="4.9" rx="8"/>
<text x="879.5" y="1574.7" font-size="24">Rx</text>
<polyline points="456,1307.44 447.5,1297 419,1297 419,1397" fill="none" stroke="#0b1c09" stroke-width="4.7" stroke-linejoin="round" stroke-linecap="butt"/>
<rect x="408.9" y="1397.3" width="22.2" height="21.4" fill="#d5e7cf" stroke="#0b1c09" stroke-width="4.9" rx="8"/>
<text x="428.4" y="1433.5" font-size="24" text-anchor="end" transform="rotate(-90 428.4 1433.5)">Mux_Asiento</text>
<polyline points="783,1624.4 745.2,1624.4 745.2,1653" fill="none" stroke="#0b1c09" stroke-width="4.7" stroke-linejoin="miter" stroke-linecap="butt"/>
<rect x="781.9" y="1615.2" width="22.2" height="21.4" fill="#d5e7cf" stroke="#0b1c09" stroke-width="4.9" rx="8"/>
<line x1="713.6" y1="1654.4" x2="777" y2="1654.4" stroke="#101010" stroke-width="3.9" stroke-linecap="butt"/>
<line x1="727.7" y1="1668.8" x2="762.2" y2="1668.8" stroke="#101010" stroke-width="3.6" stroke-linecap="butt"/>
<line x1="738.5" y1="1684" x2="750" y2="1684" stroke="#101010" stroke-width="3.3" stroke-linecap="butt"/>
<text x="820.5" y="1634" font-size="24">GND</text>
<rect x="509.4" y="1182.8" width="194" height="440.8" fill="#1a82e2" stroke="#0c2cc0" stroke-width="4.8" rx="2"/>
<rect x="561.3" y="1149.2" width="92.9" height="40" fill="#bcbcbc"/>
<text x="508" y="1650.7" font-size="24">ARD NANO</text>
<text x="506.5" y="1140.3" font-size="36">ARD1</text>
</g>
<circle cx="527.6" cy="1203.5" r="10.8" fill="#d9d9ec" stroke="#0a1f8c" stroke-width="2.6"/>
<circle cx="685.2" cy="1203.5" r="10.8" fill="#d9d9ec" stroke="#0a1f8c" stroke-width="2.6"/>
<circle cx="527.6" cy="1600.6" r="10.8" fill="#d9d9ec" stroke="#0a1f8c" stroke-width="2.6"/>
<circle cx="685.2" cy="1600.6" r="10.8" fill="#d9d9ec" stroke="#0a1f8c" stroke-width="2.6"/>
<circle cx="560.5" cy="1201" r="7.5" fill="#cfd6ee" stroke="#0f3fc4" stroke-width="2"/>
<circle cx="655" cy="1201" r="7.5" fill="#cfd6ee" stroke="#0f3fc4" stroke-width="2"/>
<circle cx="560.5" cy="1254" r="7.5" fill="#cfd6ee" stroke="#0f3fc4" stroke-width="2"/>
<circle cx="655" cy="1254" r="7.5" fill="#cfd6ee" stroke="#0f3fc4" stroke-width="2"/>
<circle cx="524.9" cy="1236.4" r="6.6" fill="#cdd9ee"/>
<circle cx="689.2" cy="1236.4" r="6.6" fill="#d8d6e2"/>
<path d="M692 1236.4L701 1232.8V1240Z" fill="#16204e"/>
<path d="M521.5 1236.4L510 1233.4V1236.9Z" fill="#1638b0"/>
<text x="538.5" y="1239.8" font-size="9.5" style="fill:#cdeeff;stroke:none" font-weight="bold">D13</text>
<text x="678.5" y="1239.8" font-size="9.5" text-anchor="end" style="fill:#cdeeff;stroke:none" font-weight="bold">D12</text>
<circle cx="524.9" cy="1260.08" r="6.6" fill="#cdd9ee"/>
<circle cx="689.2" cy="1260.08" r="6.6" fill="#d8d6e2"/>
<path d="M692 1260.08L701 1256.48V1263.68Z" fill="#16204e"/>
<text x="538.5" y="1263.48" font-size="9.5" style="fill:#4c9ee8;stroke:none" font-weight="bold">3V3</text>
<text x="678.5" y="1263.48" font-size="9.5" text-anchor="end" style="fill:#cdeeff;stroke:none" font-weight="bold">D11</text>
<circle cx="524.9" cy="1283.76" r="6.6" fill="#cdd9ee"/>
<circle cx="689.2" cy="1283.76" r="6.6" fill="#d8d6e2"/>
<path d="M692 1283.76L701 1280.16V1287.36Z" fill="#16204e"/>
<path d="M521.5 1283.76L510 1280.76V1284.26Z" fill="#1638b0"/>
<text x="538.5" y="1287.16" font-size="9.5" style="fill:#cdeeff;stroke:none" font-weight="bold">REF</text>
<text x="678.5" y="1287.16" font-size="9.5" text-anchor="end" style="fill:#cdeeff;stroke:none" font-weight="bold">D10</text>
<circle cx="524.9" cy="1307.44" r="6.6" fill="#cdd9ee"/>
<circle cx="689.2" cy="1307.44" r="6.6" fill="#d8d6e2"/>
<path d="M692 1307.44L701 1303.84V1311.04Z" fill="#16204e"/>
<path d="M521.5 1307.44L510 1304.44V1307.94Z" fill="#1638b0"/>
<text x="538.5" y="1310.84" font-size="9.5" style="fill:#cdeeff;stroke:none" font-weight="bold">A0</text>
<text x="678.5" y="1310.84" font-size="9.5" text-anchor="end" style="fill:#cdeeff;stroke:none" font-weight="bold">D9</text>
<circle cx="524.9" cy="1331.12" r="6.6" fill="#cdd9ee"/>
<circle cx="689.2" cy="1331.12" r="6.6" fill="#d8d6e2"/>
<path d="M692 1331.12L701 1327.52V1334.72Z" fill="#16204e"/>
<path d="M521.5 1331.12L510 1328.12V1331.62Z" fill="#1638b0"/>
<text x="538.5" y="1334.52" font-size="9.5" style="fill:#cdeeff;stroke:none" font-weight="bold">A1</text>
<text x="678.5" y="1334.52" font-size="9.5" text-anchor="end" style="fill:#cdeeff;stroke:none" font-weight="bold">D8</text>
<circle cx="524.9" cy="1354.8" r="6.6" fill="#cdd9ee"/>
<circle cx="689.2" cy="1354.8" r="6.6" fill="#d8d6e2"/>
<path d="M692 1354.8L701 1351.2V1358.4Z" fill="#16204e"/>
<path d="M521.5 1354.8L510 1351.8V1355.3Z" fill="#1638b0"/>
<text x="538.5" y="1358.2" font-size="9.5" style="fill:#cdeeff;stroke:none" font-weight="bold">A2</text>
<text x="678.5" y="1358.2" font-size="9.5" text-anchor="end" style="fill:#cdeeff;stroke:none" font-weight="bold">D7</text>
<circle cx="524.9" cy="1378.48" r="6.6" fill="#cdd9ee"/>
<circle cx="689.2" cy="1378.48" r="6.6" fill="#d8d6e2"/>
<path d="M692 1378.48L701 1374.88V1382.08Z" fill="#16204e"/>
<path d="M521.5 1378.48L510 1375.48V1378.98Z" fill="#1638b0"/>
<text x="538.5" y="1381.88" font-size="9.5" style="fill:#cdeeff;stroke:none" font-weight="bold">A3</text>
<text x="678.5" y="1381.88" font-size="9.5" text-anchor="end" style="fill:#cdeeff;stroke:none" font-weight="bold">D6</text>
<circle cx="524.9" cy="1402.16" r="6.6" fill="#cdd9ee"/>
<circle cx="689.2" cy="1402.16" r="6.6" fill="#d8d6e2"/>
<path d="M692 1402.16L701 1398.56V1405.76Z" fill="#16204e"/>
<path d="M521.5 1402.16L510 1399.16V1402.66Z" fill="#1638b0"/>
<text x="538.5" y="1405.56" font-size="9.5" style="fill:#cdeeff;stroke:none" font-weight="bold">A4</text>
<text x="678.5" y="1405.56" font-size="9.5" text-anchor="end" style="fill:#cdeeff;stroke:none" font-weight="bold">D5</text>
<circle cx="524.9" cy="1425.84" r="6.6" fill="#cdd9ee"/>
<circle cx="689.2" cy="1425.84" r="6.6" fill="#d8d6e2"/>
<path d="M692 1425.84L701 1422.24V1429.44Z" fill="#16204e"/>
<path d="M521.5 1425.84L510 1422.84V1426.34Z" fill="#1638b0"/>
<text x="538.5" y="1429.24" font-size="9.5" style="fill:#cdeeff;stroke:none" font-weight="bold">A5</text>
<text x="678.5" y="1429.24" font-size="9.5" text-anchor="end" style="fill:#cdeeff;stroke:none" font-weight="bold">D4</text>
<circle cx="524.9" cy="1449.52" r="6.6" fill="#cdd9ee"/>
<circle cx="689.2" cy="1449.52" r="6.6" fill="#d8d6e2"/>
<path d="M692 1449.52L701 1445.92V1453.12Z" fill="#16204e"/>
<path d="M521.5 1449.52L510 1446.52V1450.02Z" fill="#1638b0"/>
<text x="538.5" y="1452.92" font-size="9.5" style="fill:#cdeeff;stroke:none" font-weight="bold">A6</text>
<text x="678.5" y="1452.92" font-size="9.5" text-anchor="end" style="fill:#cdeeff;stroke:none" font-weight="bold">D3</text>
<circle cx="524.9" cy="1473.2" r="6.6" fill="#cdd9ee"/>
<circle cx="689.2" cy="1473.2" r="6.6" fill="#d8d6e2"/>
<path d="M692 1473.2L701 1469.6V1476.8Z" fill="#16204e"/>
<path d="M521.5 1473.2L510 1470.2V1473.7Z" fill="#1638b0"/>
<text x="538.5" y="1476.6" font-size="9.5" style="fill:#cdeeff;stroke:none" font-weight="bold">A7</text>
<text x="678.5" y="1476.6" font-size="9.5" text-anchor="end" style="fill:#cdeeff;stroke:none" font-weight="bold">D2</text>
<circle cx="524.9" cy="1496.88" r="6.6" fill="#cdd9ee"/>
<circle cx="689.2" cy="1496.88" r="6.6" fill="#d8d6e2"/>
<text x="538.5" y="1500.28" font-size="9.5" style="fill:#cdeeff;stroke:none" font-weight="bold">5V</text>
<text x="678.5" y="1500.28" font-size="9.5" text-anchor="end" style="fill:#4c9ee8;stroke:none" font-weight="bold">GND</text>
<circle cx="524.9" cy="1520.56" r="6.6" fill="#cdd9ee"/>
<circle cx="689.2" cy="1520.56" r="6.6" fill="#d8d6e2"/>
<path d="M521.5 1520.56L510 1517.56V1521.06Z" fill="#1638b0"/>
<text x="538.5" y="1523.96" font-size="9.5" style="fill:#cdeeff;stroke:none" font-weight="bold">RST</text>
<text x="678.5" y="1523.96" font-size="9.5" text-anchor="end" style="fill:#4c9ee8;stroke:none" font-weight="bold">RST</text>
<circle cx="524.9" cy="1544.24" r="6.6" fill="#cdd9ee"/>
<circle cx="689.2" cy="1544.24" r="6.6" fill="#d8d6e2"/>
<path d="M692 1544.24L701 1540.64V1547.84Z" fill="#16204e"/>
<text x="538.5" y="1547.64" font-size="9.5" style="fill:#cdeeff;stroke:none" font-weight="bold">GND</text>
<text x="678.5" y="1547.64" font-size="9.5" text-anchor="end" style="fill:#cdeeff;stroke:none" font-weight="bold">RX D0</text>
<circle cx="524.9" cy="1567.92" r="6.6" fill="#cdd9ee"/>
<circle cx="689.2" cy="1567.92" r="6.6" fill="#d8d6e2"/>
<path d="M692 1567.92L701 1564.32V1571.52Z" fill="#16204e"/>
<text x="538.5" y="1571.32" font-size="9.5" style="fill:#4c9ee8;stroke:none" font-weight="bold">VIN</text>
<text x="678.5" y="1571.32" font-size="9.5" text-anchor="end" style="fill:#cdeeff;stroke:none" font-weight="bold">TX D1</text>
<path d="M561.3 1149.2H654.2V1256L649 1262.6H566.5L561.3 1256Z" fill="#bcbcbc"/>
<path d="M561.3 1251H654.2V1256L649 1262.6H566.5L561.3 1256Z" fill="#a6a6a6"/>
<path d="M578.8 1156V1205M584.6 1156V1203M625 1156V1203M634.5 1156V1205" stroke="#9c9c9c" stroke-width="2.8" fill="none"/>
<path d="M597 1158L600 1216.5H613.2L617.8 1156" stroke="#989898" stroke-width="1.8" fill="none"/>
<path d="M579.5 1238.5H599V1229.7H614V1238.5H631.5" stroke="#989898" stroke-width="1.6" fill="none"/>
<path d="M584 1246H629" stroke="#cfcfcf" stroke-width="1.6" fill="none"/>
<path d="M606 1288.5L655.8 1338.5L606 1388.5L556 1338.5Z" fill="#3e3e38" stroke="#0a0a0a" stroke-width="4.6" stroke-linejoin="round"/>
<path d="M606 1292L606 1385L560 1338.5Z" fill="#3b3b25"/>
<circle cx="640.5" cy="1339.5" r="6" fill="#000"/>
<text x="598.6" y="1363" font-size="15.5" transform="rotate(-90 598.6 1363)" style="fill:#a9a03a;stroke:none" font-weight="bold">ATMEL</text>
<text x="610" y="1378" font-size="11" transform="rotate(-90 610 1378)" style="fill:#7c7830;stroke:none" font-weight="bold">ATMEGA328P</text>
<text x="546.5" y="1602.5" font-size="9" style="fill:#c4e6ff;stroke:none" font-weight="bold">ARDUINO NANO</text>
<text x="543" y="1612" font-size="9.2" style="fill:#8fd0ff;stroke:none" font-weight="bold" textLength="130">blogembarcado blogspot</text>
</g>
</svg>
</body>
</html>
